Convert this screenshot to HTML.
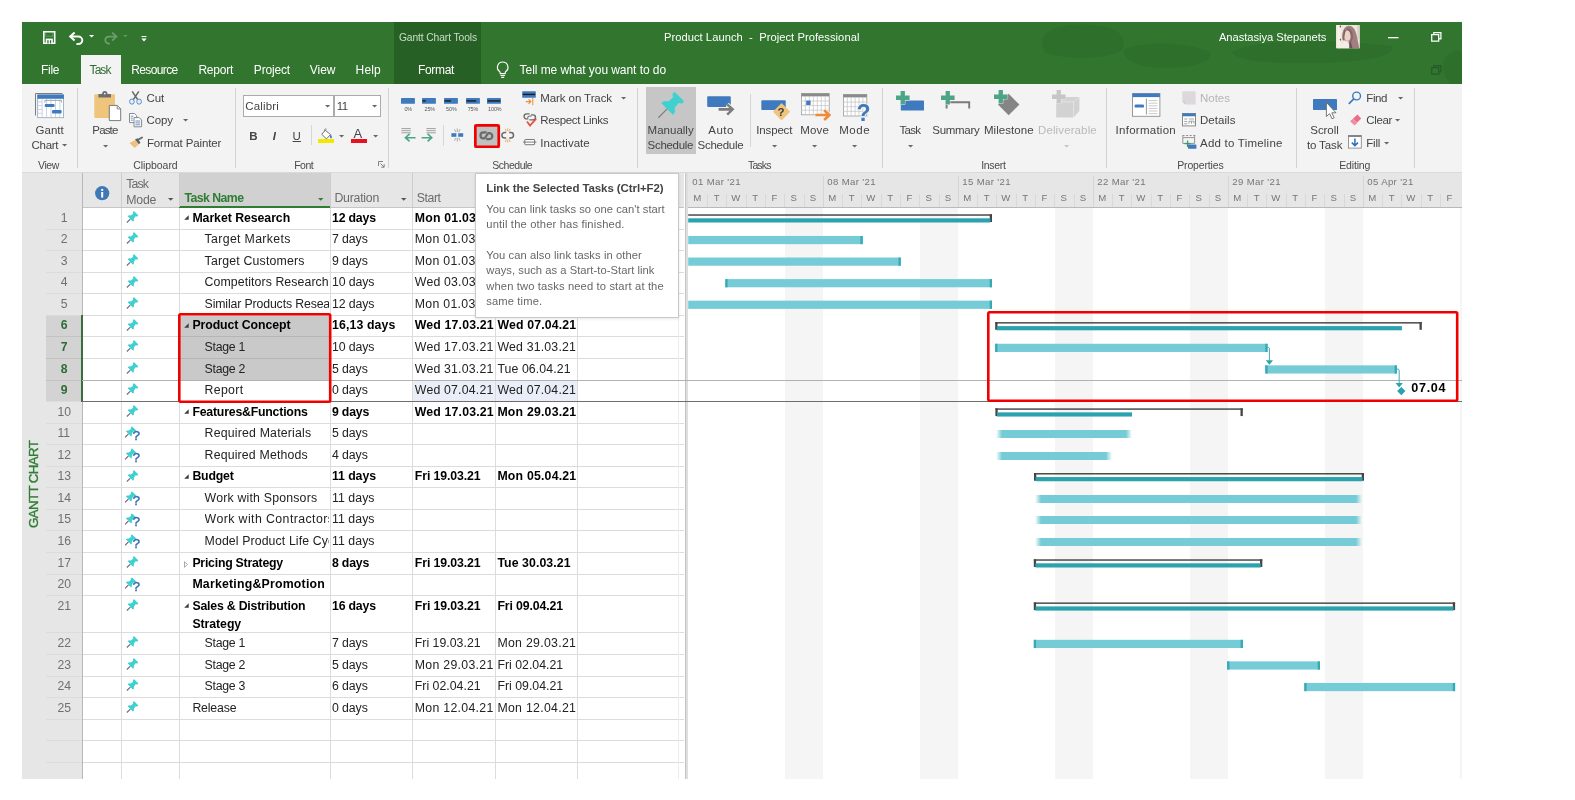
<!DOCTYPE html>
<html lang="en"><head><meta charset="utf-8"><title>Product Launch - Project Professional</title>
<style>
html,body{margin:0;padding:0;background:#fff}
body{width:1575px;height:800px;position:relative;overflow:hidden;font-family:"Liberation Sans",sans-serif}
#app{position:absolute;left:0;top:0;width:1575px;height:800px;overflow:hidden;will-change:transform}
.a{position:absolute}
.t{position:absolute;white-space:pre;line-height:1}
svg{overflow:visible}
</style></head>
<body>
<div id="app">
<div class="a" style="left:22.00px;top:22.00px;width:1440.00px;height:62.30px;background:#31752f;"></div>
<svg class="a" style="left:22px;top:22px;overflow:hidden" width="1440" height="62.3" viewBox="22 22 1440 62.3"><g fill="#2a672a" opacity="0.42"><path d="M1042 40C1046 26 1075 22 1100 26C1120 28 1128 40 1122 50C1110 60 1060 60 1044 52Z"/><path d="M1124 50C1140 40 1190 42 1210 52C1214 62 1190 69 1160 68C1138 67 1122 60 1124 50Z"/><path d="M1232 52C1250 40 1330 38 1392 46C1398 56 1360 64 1300 63C1260 63 1236 60 1232 52Z"/><path d="M1444 60C1450 50 1462 48 1470 52V84H1450C1444 76 1442 68 1444 60Z"/></g></svg>
<div class="a" style="left:394.00px;top:22.00px;width:87.20px;height:62.30px;background:#266024;"></div>
<div class="a" style="left:80.50px;top:55.00px;width:40.50px;height:30.00px;background:#f3f3f3;"></div>
<div class="a" style="left:22.00px;top:84.30px;width:1440.00px;height:87.60px;background:#f3f3f3;"></div>
<div class="a" style="left:22.00px;top:171.60px;width:1440.00px;height:1.00px;background:#dadada;"></div>
<div class="a" style="left:77.10px;top:88.30px;width:1.00px;height:80.00px;background:#d2d2d2;"></div>
<div class="a" style="left:234.90px;top:88.30px;width:1.00px;height:80.00px;background:#d2d2d2;"></div>
<div class="a" style="left:387.80px;top:88.30px;width:1.00px;height:80.00px;background:#d2d2d2;"></div>
<div class="a" style="left:636.80px;top:88.30px;width:1.00px;height:80.00px;background:#d2d2d2;"></div>
<div class="a" style="left:882.00px;top:88.30px;width:1.00px;height:80.00px;background:#d2d2d2;"></div>
<div class="a" style="left:1105.80px;top:88.30px;width:1.00px;height:80.00px;background:#d2d2d2;"></div>
<div class="a" style="left:1296.20px;top:88.30px;width:1.00px;height:80.00px;background:#d2d2d2;"></div>
<div class="a" style="left:1413.90px;top:88.30px;width:1.00px;height:80.00px;background:#d2d2d2;"></div>
<div class="a" style="left:311.20px;top:125.30px;width:1.00px;height:20.00px;background:#d6d6d6;"></div>
<div class="a" style="left:442.90px;top:125.30px;width:1.00px;height:20.50px;background:#d6d6d6;"></div>
<div class="a" style="left:750.20px;top:94.00px;width:1.00px;height:52.70px;background:#d6d6d6;"></div>
<svg class="a" style="left:61.70px;top:144.20px;" width="5.20" height="2.60" viewBox="0 0 5.2 2.6"><path d="M0 0H5.2L2.6 2.6Z" fill="#666"/></svg>
<svg class="a" style="left:102.70px;top:144.60px;" width="5.20" height="2.60" viewBox="0 0 5.2 2.6"><path d="M0 0H5.2L2.6 2.6Z" fill="#666"/></svg>
<svg class="a" style="left:182.70px;top:119.00px;" width="5.20" height="2.60" viewBox="0 0 5.2 2.6"><path d="M0 0H5.2L2.6 2.6Z" fill="#666"/></svg>
<div class="a" style="left:243.4px;top:94.5px;width:90.6px;height:22.2px;background:#fff;border:1px solid #ababab;box-sizing:border-box"></div>
<div class="a" style="left:334.2px;top:94.5px;width:46.8px;height:22.2px;background:#fff;border:1px solid #ababab;box-sizing:border-box"></div>
<svg class="a" style="left:324.70px;top:104.60px;" width="5.20" height="2.60" viewBox="0 0 5.2 2.6"><path d="M0 0H5.2L2.6 2.6Z" fill="#666"/></svg>
<svg class="a" style="left:371.70px;top:104.60px;" width="5.20" height="2.60" viewBox="0 0 5.2 2.6"><path d="M0 0H5.2L2.6 2.6Z" fill="#666"/></svg>
<svg class="a" style="left:339.40px;top:134.50px;" width="5.20" height="2.60" viewBox="0 0 5.2 2.6"><path d="M0 0H5.2L2.6 2.6Z" fill="#666"/></svg>
<svg class="a" style="left:372.70px;top:134.50px;" width="5.20" height="2.60" viewBox="0 0 5.2 2.6"><path d="M0 0H5.2L2.6 2.6Z" fill="#666"/></svg>
<div class="a" style="left:318.30px;top:139.30px;width:15.60px;height:3.70px;background:#f5e800;"></div>
<div class="a" style="left:351.00px;top:139.30px;width:15.80px;height:3.70px;background:#e81123;"></div>
<svg class="a" style="left:621.10px;top:96.70px;" width="5.20" height="2.60" viewBox="0 0 5.2 2.6"><path d="M0 0H5.2L2.6 2.6Z" fill="#666"/></svg>
<div class="a" style="left:646.00px;top:87.00px;width:49.70px;height:67.00px;background:#c6c6c6;"></div>
<svg class="a" style="left:771.80px;top:144.60px;" width="5.20" height="2.60" viewBox="0 0 5.2 2.6"><path d="M0 0H5.2L2.6 2.6Z" fill="#666"/></svg>
<svg class="a" style="left:812.10px;top:144.60px;" width="5.20" height="2.60" viewBox="0 0 5.2 2.6"><path d="M0 0H5.2L2.6 2.6Z" fill="#666"/></svg>
<svg class="a" style="left:852.40px;top:144.60px;" width="5.20" height="2.60" viewBox="0 0 5.2 2.6"><path d="M0 0H5.2L2.6 2.6Z" fill="#666"/></svg>
<svg class="a" style="left:908.10px;top:144.60px;" width="5.20" height="2.60" viewBox="0 0 5.2 2.6"><path d="M0 0H5.2L2.6 2.6Z" fill="#666"/></svg>
<svg class="a" style="left:1064.40px;top:144.60px;" width="5.20" height="2.60" viewBox="0 0 5.2 2.6"><path d="M0 0H5.2L2.6 2.6Z" fill="#c4c4c4"/></svg>
<svg class="a" style="left:1397.70px;top:96.70px;" width="5.20" height="2.60" viewBox="0 0 5.2 2.6"><path d="M0 0H5.2L2.6 2.6Z" fill="#666"/></svg>
<svg class="a" style="left:1395.40px;top:119.00px;" width="5.20" height="2.60" viewBox="0 0 5.2 2.6"><path d="M0 0H5.2L2.6 2.6Z" fill="#666"/></svg>
<svg class="a" style="left:1383.70px;top:141.50px;" width="5.20" height="2.60" viewBox="0 0 5.2 2.6"><path d="M0 0H5.2L2.6 2.6Z" fill="#666"/></svg>
<div class="a" style="left:22.00px;top:172.60px;width:24.20px;height:606.40px;background:#e6e6e6;"></div>
<div class="a" style="left:46.20px;top:172.60px;width:36.00px;height:606.40px;background:#e6e6e6;"></div>
<div class="a" style="left:82.20px;top:172.60px;width:602.30px;height:34.90px;background:#e6e6e6;"></div>
<div class="a" style="left:82.20px;top:207.50px;width:602.30px;height:571.50px;background:#fff;"></div>
<div class="a" style="left:179.30px;top:172.60px;width:151.00px;height:34.90px;background:#d1d1d1;"></div>
<div class="a" style="left:179.30px;top:205.90px;width:151.50px;height:1.80px;background:#2e7d32;"></div>
<div class="a" style="left:82.20px;top:206.90px;width:97.10px;height:1.00px;background:#c6c6c6;"></div>
<div class="a" style="left:330.30px;top:206.90px;width:354.20px;height:1.00px;background:#c6c6c6;"></div>
<div class="a" style="left:684.50px;top:172.60px;width:3.80px;height:606.40px;background:#dedede;"></div>
<div class="a" style="left:684.50px;top:172.60px;width:1.00px;height:606.40px;background:#c4c4c4;"></div>
<div class="a" style="left:688.20px;top:172.60px;width:773.80px;height:34.90px;background:#e6e6e6;"></div>
<div class="a" style="left:688.20px;top:207.50px;width:773.80px;height:571.50px;background:#fff;"></div>
<div class="a" style="left:784.73px;top:207.50px;width:38.57px;height:571.50px;background:#f5f5f5;"></div>
<div class="a" style="left:919.73px;top:207.50px;width:38.57px;height:571.50px;background:#f5f5f5;"></div>
<div class="a" style="left:1054.73px;top:207.50px;width:38.57px;height:571.50px;background:#f5f5f5;"></div>
<div class="a" style="left:1189.73px;top:207.50px;width:38.57px;height:571.50px;background:#f5f5f5;"></div>
<div class="a" style="left:1324.73px;top:207.50px;width:38.57px;height:571.50px;background:#f5f5f5;"></div>
<div class="a" style="left:1459.73px;top:207.50px;width:2.27px;height:571.50px;background:#f5f5f5;"></div>
<div class="a" style="left:688.20px;top:206.60px;width:773.80px;height:1.10px;background:#b9b9b9;"></div>
<div class="a" style="left:46.20px;top:315.31px;width:36.00px;height:86.25px;background:#d3d3d3;"></div>
<div class="a" style="left:179.30px;top:315.31px;width:151.00px;height:64.69px;background:#c9c9c9;"></div>
<div class="a" style="left:412.20px;top:380.00px;width:165.50px;height:21.56px;background:#e9eef8;"></div>
<div class="a" style="left:46.20px;top:228.56px;width:638.30px;height:1.00px;background:#dcdcdc;"></div>
<div class="a" style="left:46.20px;top:250.12px;width:638.30px;height:1.00px;background:#dcdcdc;"></div>
<div class="a" style="left:46.20px;top:271.69px;width:638.30px;height:1.00px;background:#dcdcdc;"></div>
<div class="a" style="left:46.20px;top:293.25px;width:638.30px;height:1.00px;background:#dcdcdc;"></div>
<div class="a" style="left:46.20px;top:314.81px;width:638.30px;height:1.00px;background:#dcdcdc;"></div>
<div class="a" style="left:46.20px;top:336.38px;width:638.30px;height:1.00px;background:#dcdcdc;"></div>
<div class="a" style="left:46.20px;top:357.94px;width:638.30px;height:1.00px;background:#dcdcdc;"></div>
<div class="a" style="left:46.20px;top:379.50px;width:638.30px;height:1.00px;background:#dcdcdc;"></div>
<div class="a" style="left:46.20px;top:401.06px;width:638.30px;height:1.00px;background:#dcdcdc;"></div>
<div class="a" style="left:46.20px;top:422.62px;width:638.30px;height:1.00px;background:#dcdcdc;"></div>
<div class="a" style="left:46.20px;top:444.19px;width:638.30px;height:1.00px;background:#dcdcdc;"></div>
<div class="a" style="left:46.20px;top:465.75px;width:638.30px;height:1.00px;background:#dcdcdc;"></div>
<div class="a" style="left:46.20px;top:487.31px;width:638.30px;height:1.00px;background:#dcdcdc;"></div>
<div class="a" style="left:46.20px;top:508.88px;width:638.30px;height:1.00px;background:#dcdcdc;"></div>
<div class="a" style="left:46.20px;top:530.44px;width:638.30px;height:1.00px;background:#dcdcdc;"></div>
<div class="a" style="left:46.20px;top:552.00px;width:638.30px;height:1.00px;background:#dcdcdc;"></div>
<div class="a" style="left:46.20px;top:573.56px;width:638.30px;height:1.00px;background:#dcdcdc;"></div>
<div class="a" style="left:46.20px;top:595.12px;width:638.30px;height:1.00px;background:#dcdcdc;"></div>
<div class="a" style="left:46.20px;top:632.42px;width:638.30px;height:1.00px;background:#dcdcdc;"></div>
<div class="a" style="left:46.20px;top:653.99px;width:638.30px;height:1.00px;background:#dcdcdc;"></div>
<div class="a" style="left:46.20px;top:675.55px;width:638.30px;height:1.00px;background:#dcdcdc;"></div>
<div class="a" style="left:46.20px;top:697.11px;width:638.30px;height:1.00px;background:#dcdcdc;"></div>
<div class="a" style="left:46.20px;top:718.67px;width:638.30px;height:1.00px;background:#dcdcdc;"></div>
<div class="a" style="left:46.20px;top:740.24px;width:638.30px;height:1.00px;background:#dcdcdc;"></div>
<div class="a" style="left:46.20px;top:761.80px;width:638.30px;height:1.00px;background:#dcdcdc;"></div>
<div class="a" style="left:179.30px;top:336.38px;width:151.00px;height:1.00px;background:#b5b5b5;"></div>
<div class="a" style="left:46.20px;top:336.38px;width:36.00px;height:1.00px;background:#c2c2c2;"></div>
<div class="a" style="left:179.30px;top:357.94px;width:151.00px;height:1.00px;background:#b5b5b5;"></div>
<div class="a" style="left:46.20px;top:357.94px;width:36.00px;height:1.00px;background:#c2c2c2;"></div>
<div class="a" style="left:179.30px;top:379.50px;width:151.00px;height:1.00px;background:#b5b5b5;"></div>
<div class="a" style="left:46.20px;top:379.50px;width:36.00px;height:1.00px;background:#c2c2c2;"></div>
<div class="a" style="left:121.10px;top:207.50px;width:1.00px;height:571.50px;background:#dcdcdc;"></div>
<div class="a" style="left:121.10px;top:172.60px;width:1.00px;height:34.90px;background:#cdcdcd;"></div>
<div class="a" style="left:178.80px;top:207.50px;width:1.00px;height:571.50px;background:#dcdcdc;"></div>
<div class="a" style="left:178.80px;top:172.60px;width:1.00px;height:34.90px;background:#cdcdcd;"></div>
<div class="a" style="left:329.80px;top:207.50px;width:1.00px;height:571.50px;background:#dcdcdc;"></div>
<div class="a" style="left:329.80px;top:172.60px;width:1.00px;height:34.90px;background:#cdcdcd;"></div>
<div class="a" style="left:411.70px;top:207.50px;width:1.00px;height:571.50px;background:#dcdcdc;"></div>
<div class="a" style="left:411.70px;top:172.60px;width:1.00px;height:34.90px;background:#cdcdcd;"></div>
<div class="a" style="left:495.20px;top:207.50px;width:1.00px;height:571.50px;background:#dcdcdc;"></div>
<div class="a" style="left:495.20px;top:172.60px;width:1.00px;height:34.90px;background:#cdcdcd;"></div>
<div class="a" style="left:577.20px;top:207.50px;width:1.00px;height:571.50px;background:#dcdcdc;"></div>
<div class="a" style="left:577.20px;top:172.60px;width:1.00px;height:34.90px;background:#cdcdcd;"></div>
<div class="a" style="left:678.20px;top:207.50px;width:1.00px;height:571.50px;background:#ececec;"></div>
<div class="a" style="left:81.60px;top:172.60px;width:1.20px;height:606.40px;background:#b7b7b7;"></div>
<div class="a" style="left:81.00px;top:315.31px;width:2.00px;height:86.25px;background:#3a6f3d;"></div>
<div class="a" style="left:82.20px;top:380.40px;width:1379.80px;height:1.00px;background:#b2b2b2;"></div>
<div class="a" style="left:82.20px;top:401.06px;width:1379.80px;height:1.00px;background:#6e6e6e;"></div>
<svg class="a" style="left:168.27px;top:198.03px;" width="5.46" height="2.73" viewBox="0 0 5.460000000000001 2.7300000000000004"><path d="M0 0H5.460000000000001L2.7300000000000004 2.7300000000000004Z" fill="#555"/></svg>
<svg class="a" style="left:318.47px;top:198.03px;" width="5.46" height="2.73" viewBox="0 0 5.460000000000001 2.7300000000000004"><path d="M0 0H5.460000000000001L2.7300000000000004 2.7300000000000004Z" fill="#2e7d32"/></svg>
<svg class="a" style="left:401.07px;top:198.03px;" width="5.46" height="2.73" viewBox="0 0 5.460000000000001 2.7300000000000004"><path d="M0 0H5.460000000000001L2.7300000000000004 2.7300000000000004Z" fill="#555"/></svg>
<svg class="a" style="left:183.70px;top:214.90px;" width="5.00" height="5.00" viewBox="0 0 5 5"><path d="M4.7 0.2V4.7H0.2Z" fill="#3c3c3c"/></svg>
<svg class="a" style="left:183.70px;top:322.71px;" width="5.00" height="5.00" viewBox="0 0 5 5"><path d="M4.7 0.2V4.7H0.2Z" fill="#3c3c3c"/></svg>
<svg class="a" style="left:183.70px;top:408.96px;" width="5.00" height="5.00" viewBox="0 0 5 5"><path d="M4.7 0.2V4.7H0.2Z" fill="#3c3c3c"/></svg>
<svg class="a" style="left:183.70px;top:473.65px;" width="5.00" height="5.00" viewBox="0 0 5 5"><path d="M4.7 0.2V4.7H0.2Z" fill="#3c3c3c"/></svg>
<svg class="a" style="left:184.20px;top:560.50px;" width="4.00" height="7.00" viewBox="0 0 4 7"><path d="M0.5 0.7L3.5 3.5L0.5 6.3Z" fill="#fff" stroke="#888" stroke-width="0.7"/></svg>
<svg class="a" style="left:183.70px;top:603.02px;" width="5.00" height="5.00" viewBox="0 0 5 5"><path d="M4.7 0.2V4.7H0.2Z" fill="#3c3c3c"/></svg>
<div class="a" style="left:707.09px;top:194.00px;width:1.00px;height:12.80px;background:#d8d8d8;"></div>
<div class="a" style="left:726.37px;top:194.00px;width:1.00px;height:12.80px;background:#d8d8d8;"></div>
<div class="a" style="left:745.66px;top:194.00px;width:1.00px;height:12.80px;background:#d8d8d8;"></div>
<div class="a" style="left:764.94px;top:194.00px;width:1.00px;height:12.80px;background:#d8d8d8;"></div>
<div class="a" style="left:784.23px;top:194.00px;width:1.00px;height:12.80px;background:#d8d8d8;"></div>
<div class="a" style="left:803.51px;top:194.00px;width:1.00px;height:12.80px;background:#d8d8d8;"></div>
<div class="a" style="left:822.80px;top:176.00px;width:1.00px;height:31.00px;background:#d6d6d6;"></div>
<div class="a" style="left:842.09px;top:194.00px;width:1.00px;height:12.80px;background:#d8d8d8;"></div>
<div class="a" style="left:861.37px;top:194.00px;width:1.00px;height:12.80px;background:#d8d8d8;"></div>
<div class="a" style="left:880.66px;top:194.00px;width:1.00px;height:12.80px;background:#d8d8d8;"></div>
<div class="a" style="left:899.94px;top:194.00px;width:1.00px;height:12.80px;background:#d8d8d8;"></div>
<div class="a" style="left:919.23px;top:194.00px;width:1.00px;height:12.80px;background:#d8d8d8;"></div>
<div class="a" style="left:938.51px;top:194.00px;width:1.00px;height:12.80px;background:#d8d8d8;"></div>
<div class="a" style="left:957.80px;top:176.00px;width:1.00px;height:31.00px;background:#d6d6d6;"></div>
<div class="a" style="left:977.09px;top:194.00px;width:1.00px;height:12.80px;background:#d8d8d8;"></div>
<div class="a" style="left:996.37px;top:194.00px;width:1.00px;height:12.80px;background:#d8d8d8;"></div>
<div class="a" style="left:1015.66px;top:194.00px;width:1.00px;height:12.80px;background:#d8d8d8;"></div>
<div class="a" style="left:1034.94px;top:194.00px;width:1.00px;height:12.80px;background:#d8d8d8;"></div>
<div class="a" style="left:1054.23px;top:194.00px;width:1.00px;height:12.80px;background:#d8d8d8;"></div>
<div class="a" style="left:1073.51px;top:194.00px;width:1.00px;height:12.80px;background:#d8d8d8;"></div>
<div class="a" style="left:1092.80px;top:176.00px;width:1.00px;height:31.00px;background:#d6d6d6;"></div>
<div class="a" style="left:1112.09px;top:194.00px;width:1.00px;height:12.80px;background:#d8d8d8;"></div>
<div class="a" style="left:1131.37px;top:194.00px;width:1.00px;height:12.80px;background:#d8d8d8;"></div>
<div class="a" style="left:1150.66px;top:194.00px;width:1.00px;height:12.80px;background:#d8d8d8;"></div>
<div class="a" style="left:1169.94px;top:194.00px;width:1.00px;height:12.80px;background:#d8d8d8;"></div>
<div class="a" style="left:1189.23px;top:194.00px;width:1.00px;height:12.80px;background:#d8d8d8;"></div>
<div class="a" style="left:1208.51px;top:194.00px;width:1.00px;height:12.80px;background:#d8d8d8;"></div>
<div class="a" style="left:1227.80px;top:176.00px;width:1.00px;height:31.00px;background:#d6d6d6;"></div>
<div class="a" style="left:1247.09px;top:194.00px;width:1.00px;height:12.80px;background:#d8d8d8;"></div>
<div class="a" style="left:1266.37px;top:194.00px;width:1.00px;height:12.80px;background:#d8d8d8;"></div>
<div class="a" style="left:1285.66px;top:194.00px;width:1.00px;height:12.80px;background:#d8d8d8;"></div>
<div class="a" style="left:1304.94px;top:194.00px;width:1.00px;height:12.80px;background:#d8d8d8;"></div>
<div class="a" style="left:1324.23px;top:194.00px;width:1.00px;height:12.80px;background:#d8d8d8;"></div>
<div class="a" style="left:1343.51px;top:194.00px;width:1.00px;height:12.80px;background:#d8d8d8;"></div>
<div class="a" style="left:1362.80px;top:176.00px;width:1.00px;height:31.00px;background:#d6d6d6;"></div>
<div class="a" style="left:1382.09px;top:194.00px;width:1.00px;height:12.80px;background:#d8d8d8;"></div>
<div class="a" style="left:1401.37px;top:194.00px;width:1.00px;height:12.80px;background:#d8d8d8;"></div>
<div class="a" style="left:1420.66px;top:194.00px;width:1.00px;height:12.80px;background:#d8d8d8;"></div>
<div class="a" style="left:1439.94px;top:194.00px;width:1.00px;height:12.80px;background:#d8d8d8;"></div>
<div class="a" style="left:996.30px;top:430.12px;width:135.40px;height:8.00px;background:linear-gradient(90deg,rgba(118,204,214,0) 0,#76ccd6 6px,#76ccd6 calc(100% - 6px),rgba(118,204,214,0) 100%);"></div>
<div class="a" style="left:996.30px;top:451.69px;width:115.40px;height:8.00px;background:linear-gradient(90deg,rgba(118,204,214,0) 0,#76ccd6 6px,#76ccd6 calc(100% - 6px),rgba(118,204,214,0) 100%);"></div>
<div class="a" style="left:1035.00px;top:494.81px;width:326.80px;height:8.00px;background:linear-gradient(90deg,rgba(118,204,214,0) 0,#76ccd6 6px,#76ccd6 calc(100% - 6px),rgba(118,204,214,0) 100%);"></div>
<div class="a" style="left:1035.00px;top:516.38px;width:326.80px;height:8.00px;background:linear-gradient(90deg,rgba(118,204,214,0) 0,#76ccd6 6px,#76ccd6 calc(100% - 6px),rgba(118,204,214,0) 100%);"></div>
<div class="a" style="left:1035.00px;top:537.94px;width:326.80px;height:8.00px;background:linear-gradient(90deg,rgba(118,204,214,0) 0,#76ccd6 6px,#76ccd6 calc(100% - 6px),rgba(118,204,214,0) 100%);"></div>
<svg class="a" style="left:0;top:0" width="1575" height="800" viewBox="0 0 1575 800"><rect x="688.20" y="214.30" width="303.80" height="1.45" fill="#454545"/><rect x="989.70" y="214.30" width="2.30" height="7.70" fill="#454545"/><rect x="688.20" y="218.30" width="302.20" height="4.20" fill="#2ba2ad"/><rect x="688.20" y="235.96" width="174.50" height="8.20" fill="#76ccd6"/><rect x="860.40" y="235.96" width="2.30" height="8.20" fill="#35a9b4"/><rect x="688.20" y="257.52" width="212.60" height="8.20" fill="#76ccd6"/><rect x="898.50" y="257.52" width="2.30" height="8.20" fill="#35a9b4"/><rect x="725.30" y="279.09" width="266.70" height="8.20" fill="#76ccd6"/><rect x="725.30" y="279.09" width="2.30" height="8.20" fill="#35a9b4"/><rect x="989.70" y="279.09" width="2.30" height="8.20" fill="#35a9b4"/><rect x="688.20" y="300.65" width="303.80" height="8.20" fill="#76ccd6"/><rect x="989.70" y="300.65" width="2.30" height="8.20" fill="#35a9b4"/><rect x="995.20" y="322.11" width="426.60" height="1.45" fill="#454545"/><rect x="995.20" y="322.11" width="2.30" height="7.70" fill="#454545"/><rect x="1419.50" y="322.11" width="2.30" height="7.70" fill="#454545"/><rect x="996.80" y="326.11" width="405.10" height="4.20" fill="#2ba2ad"/><rect x="995.20" y="343.77" width="272.40" height="8.20" fill="#76ccd6"/><rect x="995.20" y="343.77" width="2.30" height="8.20" fill="#35a9b4"/><rect x="1265.30" y="343.77" width="2.30" height="8.20" fill="#35a9b4"/><rect x="1265.30" y="365.34" width="131.60" height="8.20" fill="#76ccd6"/><rect x="1265.30" y="365.34" width="2.30" height="8.20" fill="#35a9b4"/><rect x="1394.60" y="365.34" width="2.30" height="8.20" fill="#35a9b4"/><rect x="995.40" y="408.36" width="247.40" height="1.45" fill="#454545"/><rect x="995.40" y="408.36" width="2.30" height="7.70" fill="#454545"/><rect x="1240.50" y="408.36" width="2.30" height="7.70" fill="#454545"/><rect x="997.00" y="412.36" width="135.00" height="4.20" fill="#2ba2ad"/><rect x="1034.00" y="473.05" width="330.00" height="1.45" fill="#454545"/><rect x="1034.00" y="473.05" width="2.30" height="7.70" fill="#454545"/><rect x="1361.70" y="473.05" width="2.30" height="7.70" fill="#454545"/><rect x="1035.60" y="477.05" width="326.80" height="4.20" fill="#2ba2ad"/><rect x="1033.80" y="559.30" width="228.50" height="1.45" fill="#454545"/><rect x="1033.80" y="559.30" width="2.30" height="7.70" fill="#454545"/><rect x="1260.00" y="559.30" width="2.30" height="7.70" fill="#454545"/><rect x="1035.40" y="563.30" width="225.30" height="4.20" fill="#2ba2ad"/><rect x="1033.80" y="602.42" width="421.30" height="1.45" fill="#454545"/><rect x="1033.80" y="602.42" width="2.30" height="7.70" fill="#454545"/><rect x="1452.80" y="602.42" width="2.30" height="7.70" fill="#454545"/><rect x="1035.40" y="606.42" width="418.10" height="4.20" fill="#2ba2ad"/><rect x="1033.80" y="639.82" width="209.10" height="8.20" fill="#76ccd6"/><rect x="1033.80" y="639.82" width="2.30" height="8.20" fill="#35a9b4"/><rect x="1240.60" y="639.82" width="2.30" height="8.20" fill="#35a9b4"/><rect x="1227.10" y="661.39" width="92.90" height="8.20" fill="#76ccd6"/><rect x="1227.10" y="661.39" width="2.30" height="8.20" fill="#35a9b4"/><rect x="1317.70" y="661.39" width="2.30" height="8.20" fill="#35a9b4"/><rect x="1304.30" y="682.95" width="150.80" height="8.20" fill="#76ccd6"/><rect x="1304.30" y="682.95" width="2.30" height="8.20" fill="#35a9b4"/><rect x="1452.80" y="682.95" width="2.30" height="8.20" fill="#35a9b4"/></svg>
<svg class="a" style="left:1260px;top:340px" width="160" height="60" viewBox="1260 340 160 60"><path d="M1267.6 347.4H1268.6L1269.4 348.4V360.6" fill="none" stroke="#2ba2ad" stroke-width="0.9"/><path d="M1265.8 360.2H1273L1269.4 364.7Z" fill="#2ba2ad"/><path d="M1396.9 369H1398.2L1399.2 370.2V383.4" fill="none" stroke="#2ba2ad" stroke-width="0.9"/><path d="M1395.6 383H1402.8L1399.2 387.4Z" fill="#2ba2ad"/><path d="M1401.3 386.9L1405.5 391.1L1401.3 395.3L1397.1 391.1Z" fill="#2ba2ad"/></svg>
<div class="a" style="left:474.00px;top:124.30px;width:25.50px;height:23.60px;background:#c0c0c0;"></div>
<svg class="a" style="left:473.70px;top:124.00px;" width="26.10" height="24.10" viewBox="0 0 26.10 24.10"><rect x="1.35" y="1.35" width="23.40" height="21.40" rx="1.5" fill="none" stroke="#f20000" stroke-width="2.7"/></svg>
<svg class="a" style="left:43.00px;top:31.00px;" width="12.50" height="13.00" viewBox="0 0 12.5 13"><path d="M0.8 0.8H11.7V12.2H0.8Z" fill="none" stroke="#fff" stroke-width="1.6"/><rect x="2.7" y="7.6" width="7.1" height="4.8" fill="#fff"/><rect x="4.3" y="9.2" width="1.3" height="3.2" fill="#31752f"/><rect x="6.9" y="9.2" width="1.3" height="3.2" fill="#31752f"/><path d="M2.7 0.8V5.2H9.8V0.8" fill="none" stroke="#fff" stroke-width="0.5" opacity="0.5"/></svg>
<svg class="a" style="left:69.00px;top:31.50px;" width="14.50" height="12.50" viewBox="0 0 14.5 12.5"><path d="M5.6 0.6L1.2 4.6L5.6 8.6" fill="none" stroke="#fff" stroke-width="2"/><path d="M1.6 4.6H9.2A4.1 3.7 0 0 1 9.2 12H7.4" fill="none" stroke="#fff" stroke-width="2"/></svg>
<svg class="a" style="left:88.90px;top:35.30px;" width="5.20" height="2.60" viewBox="0 0 5.2 2.6"><path d="M0 0H5.2L2.6 2.6Z" fill="#fff"/></svg>
<svg class="a" style="left:103.00px;top:31.50px;" width="14.50" height="12.50" viewBox="0 0 14.5 12.5"><g opacity="0.38"><path d="M9.1 0.6L13.5 4.6L9.1 8.6" fill="none" stroke="#cfe3cf" stroke-width="1.7"/><path d="M13.1 4.6H5.3A4 3.6 0 0 0 5.3 11.6H6.9" fill="none" stroke="#cfe3cf" stroke-width="1.7"/></g></svg>
<svg class="a" style="left:122.66px;top:35.43px;" width="4.68" height="2.34" viewBox="0 0 4.680000000000001 2.3400000000000003"><path d="M0 0H4.680000000000001L2.3400000000000003 2.3400000000000003Z" fill="#5f9a5e"/></svg>
<svg class="a" style="left:141.00px;top:36.00px;" width="6.00" height="6.50" viewBox="0 0 6 6.5"><rect x="0.6" y="0" width="4.8" height="1.1" fill="#fff"/><path d="M0.3 2.6H5.7L3 5.6Z" fill="#fff"/></svg>
<svg class="a" style="left:495.50px;top:61.00px;" width="13.50" height="18.00" viewBox="0 0 13.5 18"><path d="M6.7 1A5.2 5.2 0 0 0 3.6 10.4Q4.3 11.2 4.3 12.6H9.1Q9.1 11.2 9.8 10.4A5.2 5.2 0 0 0 6.7 1Z" fill="none" stroke="#fff" stroke-width="1.2"/><path d="M4.5 14.5H8.9M5.2 16.4H8.2" stroke="#fff" stroke-width="1.1"/></svg>
<svg class="a" style="left:1336.00px;top:24.90px;" width="23.80" height="23.30" viewBox="0 0 23.8 23.3"><rect width="23.8" height="23.3" fill="#efe7dc"/><path d="M1.5 0H4.5V23.3H1.5Z" fill="#f8f3ea"/><path d="M21.4 0H23V14H21.4Z" fill="#d8d0c4"/><path d="M6.4 15.2C5.4 8 7.6 1.4 12.6 0.7C17 0.5 19.6 5 20.6 10C21.6 15 22.6 19 23.2 23.3H13.2C13 20 12 17 9.6 15.6Z" fill="#a07f80"/><path d="M4.6 23.3C5.6 18.6 8 16.6 10.6 16.3C12.6 16.6 13.3 19 13.3 23.3Z" fill="#f3efe7"/><ellipse cx="11.5" cy="10.6" rx="3.5" ry="5.3" fill="#ecd3c5"/><path d="M10.6 16.2C11.6 16.6 12.4 16.2 12.8 15.4L13.2 18.6C12.2 18 11.2 17.2 10.6 16.2Z" fill="#e4c6b8"/><path d="M10.8 3.4C14 3 16.6 6 16.9 10C17.1 14 15.6 17.4 13.6 20C14.9 16 15.2 11.4 14 8C13.2 6 12 5 10.4 5.3Z" fill="#87676e"/><path d="M8.6 4.8C7 8 7 12 7.7 15.8C8.5 13 8.4 9 9.8 5.4Z" fill="#7c5e68"/><path d="M13.4 17C13.6 19.4 13.6 21.4 13.4 23.3H16.4C16 21 15.4 18.6 14.6 16.4Z" fill="#6d5160"/><ellipse cx="4.3" cy="1.6" rx="0.6" ry="1" fill="#3a3030"/><ellipse cx="4.4" cy="14.6" rx="0.5" ry="1.2" fill="#5a4a44"/></svg>
<svg class="a" style="left:1387.50px;top:36.80px;" width="10.50" height="1.50" viewBox="0 0 10.5 1.5"><rect width="10.5" height="1.3" fill="#fff"/></svg>
<svg class="a" style="left:1430.80px;top:31.80px;" width="10.60" height="9.80" viewBox="0 0 10.6 9.8"><path d="M0.7 2.7H7.7V9.1H0.7Z" fill="none" stroke="#fff" stroke-width="1.25"/><path d="M2.8 2.6V0.7H9.9V7H7.9" fill="none" stroke="#fff" stroke-width="1.25"/></svg>
<svg class="a" style="left:1430.80px;top:65.20px;" width="10.60" height="9.80" viewBox="0 0 10.6 9.8"><g opacity="0.85"><path d="M0.7 2.7H7.7V9.1H0.7Z" fill="none" stroke="#24552a" stroke-width="1.25"/><path d="M2.8 2.6V0.7H9.9V7H7.9" fill="none" stroke="#24552a" stroke-width="1.25"/></g></svg>
<svg class="a" style="left:34.50px;top:93.00px;" width="30.00" height="25.00" viewBox="0 0 30 25"><path d="M0.5 22.5V0.5H27.5" fill="none" stroke="#7d7d7d" stroke-width="1"/><rect x="2.7" y="1.9" width="25.9" height="22.8" fill="#fff" stroke="#8fa3bf" stroke-width="0.8"/><rect x="2.4" y="1.6" width="26.5" height="4.2" fill="#3f7abf"/><path d="M7.15 5.8V24.5M11.6 5.8V24.5M16 5.8V24.5M20.5 5.8V24.5M24.9 5.8V24.5M2.9 8.9H7.1M2.9 12.7H7.1M2.9 16.5H7.1M2.9 20.3H7.1" stroke="#b8c6dc" stroke-width="0.75" fill="none"/><path d="M9.9 9.6V7.4H26.4V9.6" fill="none" stroke="#9d9d9d" stroke-width="0.9"/><rect x="9.7" y="11.0" width="9.9" height="3.1" rx="1.1" fill="#3f7abf"/><rect x="17" y="17.1" width="9.6" height="3.5" rx="1.1" fill="#3f7abf"/></svg>
<svg class="a" style="left:94.00px;top:91.00px;" width="27.50" height="30.00" viewBox="0 0 27.5 30"><rect x="0.3" y="3.3" width="20.7" height="23.7" rx="0.9" fill="#efc57b"/><path d="M4.4 6.6V3.1H8.0Q8.2 0.1 10.8 0.1Q13.4 0.1 13.6 3.1H17V6.6Z" fill="#6e6e6e"/><circle cx="10.8" cy="2.6" r="0.9" fill="#f3f3f3"/><path d="M15.3 14.4H23.2L26.7 17.9V29.6H15.3Z" fill="#fff" stroke="#7b7b7b" stroke-width="1"/><path d="M23.2 14.4V17.9H26.7" fill="none" stroke="#7b7b7b" stroke-width="0.9"/></svg>
<svg class="a" style="left:129.00px;top:91.00px;" width="13.00" height="13.50" viewBox="0 0 13 13.5"><path d="M3.2 0.4L9.0 9.2M9.8 0.4L4.0 9.2" stroke="#666" stroke-width="1.5" fill="none"/><ellipse cx="2.9" cy="10.6" rx="2.3" ry="2.6" fill="#e6f0fa" stroke="#5a8bc9" stroke-width="1"/><ellipse cx="10.1" cy="10.6" rx="2.3" ry="2.6" fill="#e6f0fa" stroke="#5a8bc9" stroke-width="1"/></svg>
<svg class="a" style="left:129.00px;top:113.00px;" width="13.50" height="14.50" viewBox="0 0 13.5 14.5"><path d="M0.5 0.5H5.4L7.6 2.7V9.6H0.5Z" fill="#fff" stroke="#7d7d7d" stroke-width="0.9"/><path d="M5 4.6H10.2L12.6 7V13.8H5Z" fill="#fff" stroke="#7d7d7d" stroke-width="0.9"/><path d="M1.8 3.2H4.4M1.8 5.2H3.8M1.8 7.2H3.8" stroke="#3f7abf" stroke-width="0.8"/><path d="M6.4 8H11.2M6.4 9.9H11.2M6.4 11.8H11.2" stroke="#3f7abf" stroke-width="0.8"/></svg>
<svg class="a" style="left:129.00px;top:135.50px;" width="13.50" height="13.00" viewBox="0 0 13.5 13"><path d="M0.5 6.9L6.2 3.9L9.6 8.4L5.6 11.9Z" fill="#efc079"/><path d="M6.0 3.6L8.5 2.2L11.5 6.8L9.8 8.3Z" fill="#5f5f5f"/><path d="M9.8 3.4L13 1.5" stroke="#6a6a78" stroke-width="1.9" stroke-linecap="round"/></svg>
<svg class="a" style="left:320.50px;top:127.50px;" width="12.00" height="12.00" viewBox="0 0 12 12"><path d="M4.2 2.2L9.6 6.6L5.4 10.8L0.8 6.4Z" fill="#fff" stroke="#6d6d6d" stroke-width="0.95"/><path d="M3.6 3.4C3 1.4 4.4 0.3 5.6 1.2" fill="none" stroke="#6d6d6d" stroke-width="0.8"/><path d="M9.4 6.3C10.6 7.6 11.4 9 10.6 10C9.8 10.8 8.8 10 9 8.8Z" fill="#3f7abf"/></svg>
<svg class="a" style="left:377.50px;top:161.20px;" width="7.00" height="7.00" viewBox="0 0 7 7"><path d="M0.5 5V0.5H5" fill="none" stroke="#777" stroke-width="0.9"/><path d="M2.4 2.4L6 6M6.2 3.2V6.2H3.2" fill="none" stroke="#777" stroke-width="0.9"/></svg>
<svg class="a" style="left:400.70px;top:98.30px;" width="14.00" height="6.00" viewBox="0 0 14 6"><rect x="0" y="0" width="13.9" height="5.8" rx="0.6" fill="#3f7abf"/></svg>
<svg class="a" style="left:422.30px;top:98.30px;" width="14.00" height="6.00" viewBox="0 0 14 6"><rect x="0" y="0" width="13.9" height="5.8" rx="0.6" fill="#3f7abf"/><rect x="0.6" y="2.2" width="3.17" height="1.4" fill="#1c1c1c"/></svg>
<svg class="a" style="left:443.90px;top:98.30px;" width="14.00" height="6.00" viewBox="0 0 14 6"><rect x="0" y="0" width="13.9" height="5.8" rx="0.6" fill="#3f7abf"/><rect x="0.6" y="2.2" width="6.35" height="1.4" fill="#1c1c1c"/></svg>
<svg class="a" style="left:465.50px;top:98.30px;" width="14.00" height="6.00" viewBox="0 0 14 6"><rect x="0" y="0" width="13.9" height="5.8" rx="0.6" fill="#3f7abf"/><rect x="0.6" y="2.2" width="9.52" height="1.4" fill="#1c1c1c"/></svg>
<svg class="a" style="left:487.10px;top:98.30px;" width="14.00" height="6.00" viewBox="0 0 14 6"><rect x="0" y="0" width="13.9" height="5.8" rx="0.6" fill="#3f7abf"/><rect x="0.6" y="2.2" width="12.70" height="1.4" fill="#1c1c1c"/></svg>
<svg class="a" style="left:400.50px;top:128.00px;" width="15.20" height="13.60" viewBox="0 0 15.2 13.6"><path d="M0.4 0.6H9.8M0.4 2.7H9.8M0.4 4.8H9.8" stroke="#8a8a8a" stroke-width="0.8"/><path d="M14.6 9.7H4.6M8.6 5.9L4.4 9.7L8.6 13.4" fill="none" stroke="#4ea585" stroke-width="1.6"/></svg>
<svg class="a" style="left:421.20px;top:128.00px;" width="15.20" height="13.60" viewBox="0 0 15.2 13.6"><path d="M5.4 0.6H14.8M5.4 2.7H14.8M5.4 4.8H14.8" stroke="#8a8a8a" stroke-width="0.8"/><path d="M0.6 9.7H10.6M6.6 5.9L10.8 9.7L6.6 13.4" fill="none" stroke="#4ea585" stroke-width="1.6"/></svg>
<svg class="a" style="left:451.00px;top:128.30px;" width="13.00" height="14.00" viewBox="0 0 13 14"><rect x="0.4" y="5.2" width="5" height="3.6" fill="#3f7abf"/><rect x="7.2" y="5.2" width="5" height="3.6" fill="#3f7abf"/><path d="M6.3 0.4V4M6.3 10V13.6M3.4 1.2L5 4.2M9.2 1.2L7.6 4.2M3.4 12.8L5 9.8M9.2 12.8L7.6 9.8" stroke="#8d8d8d" stroke-width="0.7"/></svg>
<svg class="a" style="left:479.30px;top:130.60px;" width="15.00" height="9.50" viewBox="0 0 15 9.5"><path d="M7.6 1.4H4.5A3 3 0 0 0 4.5 7.4H5.6L9.2 2.2H10.3A3 3 0 0 1 10.3 8.2H7.2" fill="none" stroke="#6b6b6b" stroke-width="2.2" stroke-linejoin="round"/></svg>
<svg class="a" style="left:501.00px;top:128.00px;" width="13.50" height="15.00" viewBox="0 0 13.5 15"><path d="M5.2 4.6H3.6A2.7 2.7 0 0 0 3.6 10H5.2" fill="none" stroke="#6a6a6a" stroke-width="1.5"/><path d="M8.2 4.6H9.8A2.7 2.7 0 0 1 9.8 10H8.2" fill="none" stroke="#6a6a6a" stroke-width="1.5"/><path d="M6.7 0.2V3.2M4.2 0.8L5.4 3.4M9.2 0.8L8 3.4M6.7 14.6V11.6M4.2 14L5.4 11.4M9.2 14L8 11.4" stroke="#ee9a4d" stroke-width="0.8"/></svg>
<svg class="a" style="left:522.40px;top:90.60px;" width="14.20" height="14.40" viewBox="0 0 14.2 14.4"><rect x="0.2" y="0.2" width="13.6" height="6.6" rx="0.6" fill="#3f7abf"/><rect x="0.8" y="2.7" width="12.4" height="1.4" fill="#1c1c1c"/><path d="M10.8 6.8V14.2" stroke="#ee8a3a" stroke-width="1"/><path d="M3.8 10.6H8.8M6.6 8.4L8.9 10.6L6.6 12.8" fill="none" stroke="#ee8a3a" stroke-width="1.1"/></svg>
<svg class="a" style="left:522.60px;top:112.80px;" width="14.00" height="14.40" viewBox="0 0 14 14.4"><path d="M6.6 0.9H3.6A2.5 2.5 0 0 0 3.6 5.9H5.4" fill="none" stroke="#6a6a6a" stroke-width="1.4"/><path d="M6.4 6.9H10A2.5 2.5 0 0 0 10 1.9H8" fill="none" stroke="#6a6a6a" stroke-width="1.4"/><path d="M4.4 4.6C5.4 3 7 2.8 8.4 3.2" fill="none" stroke="#6a6a6a" stroke-width="1.2"/><path d="M4 8.6L7 12.6L13.2 5.6" fill="none" stroke="#e0533a" stroke-width="1.7"/></svg>
<svg class="a" style="left:522.80px;top:138.80px;" width="13.40" height="6.40" viewBox="0 0 13.4 6.4"><rect x="1.8" y="0.5" width="9.8" height="5.2" rx="0.5" fill="#fff" stroke="#6d6d6d" stroke-width="0.9"/><path d="M0 3.1H13.4" stroke="#6d6d6d" stroke-width="0.9"/></svg>
<svg class="a" style="left:658px;top:92px" width="27" height="26" viewBox="-13.5 -11 11.5 11"><g transform="translate(-7.45,-6.0) scale(1.02)"><g transform="rotate(45)"><path d="M0 3V8.2" stroke="#7d7d7d" stroke-width="0.5"/><path d="M-2.6 -4.3H2.6Q3.3 -3.4 2.5 -2.7L1.6 -2.1L1.9 0.5Q3.6 1.4 3.4 3H-3.4Q-3.6 1.4 -1.9 0.5L-1.6 -2.1L-2.5 -2.7Q-3.3 -3.4 -2.6 -4.3Z" fill="#3fd0d0"/></g></g></svg>
<svg class="a" style="left:706.80px;top:95.80px;" width="27.20" height="19.20" viewBox="0 0 27.2 19.2"><rect x="0.2" y="0.2" width="23.6" height="10.7" rx="0.8" fill="#3f7abf"/><path d="M11.6 13.4H24.6M20.2 8.4L25.6 13.4L20.2 18.6" fill="none" stroke="#f3f3f3" stroke-width="4.4"/><path d="M11.6 13.4H24.6M20.2 8.4L25.6 13.4L20.2 18.6" fill="none" stroke="#7d7d7d" stroke-width="2.6"/></svg>
<svg class="a" style="left:761.00px;top:99.80px;" width="29.50" height="20.60" viewBox="0 0 29.5 20.6"><rect x="0.3" y="0.3" width="24.4" height="9.8" rx="0.8" fill="#3f7abf"/><path d="M20.6 3L29.2 11.8L20.6 20.4L12 11.8Z" fill="#f0c47c"/></svg>
<svg class="a" style="left:801.00px;top:93.20px;" width="29.50" height="28.00" viewBox="0 0 29.5 28"><rect x="0.4" y="0.4" width="27.8" height="21.4" fill="#fff" stroke="#9b9b9b" stroke-width="0.8"/><rect x="0.4" y="0.4" width="27.8" height="3" fill="#8a8a8a"/><path d="M4.37 3.4V21.8M8.34 3.4V21.8M12.31 3.4V21.8M16.29 3.4V21.8M20.26 3.4V21.8M24.23 3.4V21.8M0.4 8.00H28.200000000000003M0.4 12.60H28.200000000000003M0.4 17.20H28.200000000000003" stroke="#c4c4c4" stroke-width="0.75" fill="none"/><rect x="5.2" y="7.6" width="4.4" height="4.4" fill="#3f7abf"/><rect x="12" y="15" width="18" height="13" fill="#f3f3f3" opacity="0"/><path d="M14.4 22H27.4M23.2 17.2L28.4 22L23.2 27" fill="none" stroke="#f3f3f3" stroke-width="4.2"/><path d="M14.4 22H27.4M23.2 17.2L28.4 22L23.2 27" fill="none" stroke="#ee8a3a" stroke-width="2.6"/></svg>
<svg class="a" style="left:842.60px;top:94.00px;" width="28.00" height="27.00" viewBox="0 0 28 27"><rect x="0.4" y="0.4" width="23.4" height="21.599999999999998" fill="#fff" stroke="#9b9b9b" stroke-width="0.8"/><rect x="0.4" y="0.4" width="23.4" height="3" fill="#8a8a8a"/><path d="M4.30 3.4V22.0M8.20 3.4V22.0M12.10 3.4V22.0M16.00 3.4V22.0M19.90 3.4V22.0M0.4 8.05H23.8M0.4 12.70H23.8M0.4 17.35H23.8" stroke="#c4c4c4" stroke-width="0.75" fill="none"/></svg>
<svg class="a" style="left:896.00px;top:91.20px;" width="28.40" height="20.00" viewBox="0 0 28.4 20"><rect x="4.8" y="9.4" width="23.2" height="10.1" rx="0.6" fill="#3f7abf"/><path d="M4.6 0H8.9V4.6H13.6V8.9H8.9V13.5H4.6V8.9H0V4.6H4.6Z" fill="#4ea585" stroke="#f3f3f3" stroke-width="0.9" paint-order="stroke fill"/></svg>
<svg class="a" style="left:940.60px;top:91.20px;" width="29.40" height="19.00" viewBox="0 0 29.4 19"><path d="M5.6 17.4V11.2H28.2V17.4" fill="none" stroke="#7a7a7a" stroke-width="1.9"/><path d="M4.6 0H8.9V4.6H13.6V8.9H8.9V13.5H4.6V8.9H0V4.6H4.6Z" fill="#4ea585" stroke="#f3f3f3" stroke-width="0.9" paint-order="stroke fill"/></svg>
<svg class="a" style="left:994.00px;top:90.20px;" width="26.00" height="25.60" viewBox="0 0 26 25.6"><path d="M14.6 3.8L25.4 14.6L14.6 25.2L4 14.6Z" fill="#858585"/><path d="M4.6 0H8.9V4.6H13.6V8.9H8.9V13.5H4.6V8.9H0V4.6H4.6Z" fill="#4ea585" stroke="#f3f3f3" stroke-width="0.9" paint-order="stroke fill"/></svg>
<svg class="a" style="left:1052.00px;top:90.20px;" width="28.00" height="28.20" viewBox="0 0 28 28.2"><g opacity="0.9"><path d="M4.2 11.8L10.2 7H27.4V21L21.6 27.6H4.2Z" fill="#cfcfcf"/><path d="M4.2 11.8H21.6V27.6M21.6 11.8L27.4 7" fill="none" stroke="#e4e4e4" stroke-width="0.9"/></g><path d="M4.6 0H8.9V4.6H13.6V8.9H8.9V13.5H4.6V8.9H0V4.6H4.6Z" fill="#c6c6c6" stroke="#f3f3f3" stroke-width="0.9" paint-order="stroke fill"/></svg>
<svg class="a" style="left:1131.80px;top:93.20px;" width="28.60" height="23.80" viewBox="0 0 28.6 23.8"><rect x="0.5" y="0.5" width="27.4" height="22.8" fill="#fff" stroke="#8d8d8d" stroke-width="0.9"/><rect x="0.5" y="0.5" width="27.4" height="3.6" fill="#3f7abf"/><rect x="2.6" y="11.4" width="9.4" height="3.2" rx="1.2" fill="#3f7abf"/><path d="M14.4 5.6V21.6" stroke="#9a9a9a" stroke-width="1"/><path d="M16.6 7.6H25.4M16.6 10.2H25.4M16.6 12.8H25.4M16.6 15.4H25.4M16.6 18H25.4M16.6 20.6H25.4" stroke="#c4c4c4" stroke-width="0.9"/></svg>
<svg class="a" style="left:1182.00px;top:90.60px;" width="14.00" height="14.00" viewBox="0 0 14 14"><path d="M0.3 0.3H13.6V13.4H3.4L0.3 10.4Z" fill="#dcd8dc"/><path d="M0.3 10.4H3.4V13.4" fill="#cfcacf"/></svg>
<svg class="a" style="left:1182.00px;top:112.80px;" width="14.00" height="13.60" viewBox="0 0 14 13.6"><rect x="0.5" y="0.5" width="13" height="12.4" fill="#fff" stroke="#7d7d7d" stroke-width="0.9"/><rect x="0.5" y="0.5" width="13" height="2.8" fill="#3f7abf"/><path d="M2.2 6H5.4M2.2 8.4H5.4M2.2 10.8H5.4M7 6H12M7 10.8V8.2H12V10.8M9.5 8.2V10.8" fill="none" stroke="#8d8d8d" stroke-width="0.8"/></svg>
<svg class="a" style="left:1181.60px;top:135.00px;" width="14.60" height="14.20" viewBox="0 0 14.6 14.2"><path d="M0.4 0.5H13.4" stroke="#8a8a8a" stroke-width="0.9" stroke-dasharray="2.2 1.4"/><path d="M0.8 2.6H12.6V8.4H0.8Z" fill="none" stroke="#8a8a8a" stroke-width="0.9"/><path d="M0.8 2.6V0.6M12.6 2.6V0.6" stroke="#8a8a8a" stroke-width="0.8"/><rect x="6" y="9.6" width="8.4" height="4.2" rx="0.6" fill="#3f7abf"/><path d="M5.6 5.4V12M2.4 8.7H8.8" stroke="#3c9a6a" stroke-width="1.3"/></svg>
<svg class="a" style="left:1313.00px;top:99.00px;" width="25.00" height="20.40" viewBox="0 0 25 20.4"><rect x="0" y="0" width="24" height="11" rx="0.6" fill="#3f7abf"/><path d="M13.4 3.4V17.6L16.6 14.6L19 19.8L21.2 18.8L18.8 13.8H23Z" fill="#fff" stroke="#6a6a6a" stroke-width="0.9"/></svg>
<svg class="a" style="left:1348.40px;top:90.60px;" width="14.00" height="14.00" viewBox="0 0 14 14"><circle cx="8.6" cy="5" r="3.9" fill="none" stroke="#3f7abf" stroke-width="1.4"/><path d="M5.8 7.8L0.8 12.8" stroke="#3f7abf" stroke-width="1.7"/></svg>
<svg class="a" style="left:1349.00px;top:113.60px;" width="13.00" height="12.60" viewBox="0 0 13 12.6"><path d="M8.4 0.6L12.2 4.4L5.6 11.2L1.4 7.2Z" fill="#ec6d85"/><path d="M3.6 5L7.8 9" stroke="#f3f3f3" stroke-width="0.7"/><path d="M1.4 7.2L3.6 5L7.8 9L5.6 11.2Z" fill="#f08da0"/></svg>
<svg class="a" style="left:1348.20px;top:135.20px;" width="14.00" height="13.80" viewBox="0 0 14 13.8"><rect x="0.5" y="0.5" width="12.8" height="12.6" fill="#fff" stroke="#8a8a8a" stroke-width="0.9"/><rect x="0.5" y="0.5" width="12.8" height="1.4" fill="#777"/><path d="M6.9 3.6V10.4M3.8 7.6L6.9 10.6L10 7.6" fill="none" stroke="#2f6fbf" stroke-width="1.5"/></svg>
<svg class="a" style="left:94.50px;top:186.30px;" width="14.40" height="14.40" viewBox="0 0 14.4 14.4"><circle cx="7.2" cy="7.2" r="7.1" fill="#3f78b7"/><rect x="6.2" y="6" width="2" height="5.6" fill="#fff"/><circle cx="7.2" cy="3.9" r="1.15" fill="#fff"/></svg>
<svg class="a" style="left:126.4px;top:210.90px" width="12" height="12" viewBox="-6 -6 12 12"><g transform="translate(0.75,-0.35) scale(1.12)"><g transform="rotate(45)"><path d="M0 3V7.4" stroke="#6a6a7a" stroke-width="1"/><path d="M-2.6 -4.3H2.6Q3.3 -3.4 2.5 -2.7L1.6 -2.1L1.9 0.5Q3.6 1.4 3.4 3H-3.4Q-3.6 1.4 -1.9 0.5L-1.6 -2.1L-2.5 -2.7Q-3.3 -3.4 -2.6 -4.3Z" fill="#3fd0d0"/></g></g></svg>
<svg class="a" style="left:126.4px;top:232.46px" width="12" height="12" viewBox="-6 -6 12 12"><g transform="translate(0.75,-0.35) scale(1.12)"><g transform="rotate(45)"><path d="M0 3V7.4" stroke="#6a6a7a" stroke-width="1"/><path d="M-2.6 -4.3H2.6Q3.3 -3.4 2.5 -2.7L1.6 -2.1L1.9 0.5Q3.6 1.4 3.4 3H-3.4Q-3.6 1.4 -1.9 0.5L-1.6 -2.1L-2.5 -2.7Q-3.3 -3.4 -2.6 -4.3Z" fill="#3fd0d0"/></g></g></svg>
<svg class="a" style="left:126.4px;top:254.03px" width="12" height="12" viewBox="-6 -6 12 12"><g transform="translate(0.75,-0.35) scale(1.12)"><g transform="rotate(45)"><path d="M0 3V7.4" stroke="#6a6a7a" stroke-width="1"/><path d="M-2.6 -4.3H2.6Q3.3 -3.4 2.5 -2.7L1.6 -2.1L1.9 0.5Q3.6 1.4 3.4 3H-3.4Q-3.6 1.4 -1.9 0.5L-1.6 -2.1L-2.5 -2.7Q-3.3 -3.4 -2.6 -4.3Z" fill="#3fd0d0"/></g></g></svg>
<svg class="a" style="left:126.4px;top:275.59px" width="12" height="12" viewBox="-6 -6 12 12"><g transform="translate(0.75,-0.35) scale(1.12)"><g transform="rotate(45)"><path d="M0 3V7.4" stroke="#6a6a7a" stroke-width="1"/><path d="M-2.6 -4.3H2.6Q3.3 -3.4 2.5 -2.7L1.6 -2.1L1.9 0.5Q3.6 1.4 3.4 3H-3.4Q-3.6 1.4 -1.9 0.5L-1.6 -2.1L-2.5 -2.7Q-3.3 -3.4 -2.6 -4.3Z" fill="#3fd0d0"/></g></g></svg>
<svg class="a" style="left:126.4px;top:297.15px" width="12" height="12" viewBox="-6 -6 12 12"><g transform="translate(0.75,-0.35) scale(1.12)"><g transform="rotate(45)"><path d="M0 3V7.4" stroke="#6a6a7a" stroke-width="1"/><path d="M-2.6 -4.3H2.6Q3.3 -3.4 2.5 -2.7L1.6 -2.1L1.9 0.5Q3.6 1.4 3.4 3H-3.4Q-3.6 1.4 -1.9 0.5L-1.6 -2.1L-2.5 -2.7Q-3.3 -3.4 -2.6 -4.3Z" fill="#3fd0d0"/></g></g></svg>
<svg class="a" style="left:126.4px;top:318.71px" width="12" height="12" viewBox="-6 -6 12 12"><g transform="translate(0.75,-0.35) scale(1.12)"><g transform="rotate(45)"><path d="M0 3V7.4" stroke="#6a6a7a" stroke-width="1"/><path d="M-2.6 -4.3H2.6Q3.3 -3.4 2.5 -2.7L1.6 -2.1L1.9 0.5Q3.6 1.4 3.4 3H-3.4Q-3.6 1.4 -1.9 0.5L-1.6 -2.1L-2.5 -2.7Q-3.3 -3.4 -2.6 -4.3Z" fill="#3fd0d0"/></g></g></svg>
<svg class="a" style="left:126.4px;top:340.27px" width="12" height="12" viewBox="-6 -6 12 12"><g transform="translate(0.75,-0.35) scale(1.12)"><g transform="rotate(45)"><path d="M0 3V7.4" stroke="#6a6a7a" stroke-width="1"/><path d="M-2.6 -4.3H2.6Q3.3 -3.4 2.5 -2.7L1.6 -2.1L1.9 0.5Q3.6 1.4 3.4 3H-3.4Q-3.6 1.4 -1.9 0.5L-1.6 -2.1L-2.5 -2.7Q-3.3 -3.4 -2.6 -4.3Z" fill="#3fd0d0"/></g></g></svg>
<svg class="a" style="left:126.4px;top:361.84px" width="12" height="12" viewBox="-6 -6 12 12"><g transform="translate(0.75,-0.35) scale(1.12)"><g transform="rotate(45)"><path d="M0 3V7.4" stroke="#6a6a7a" stroke-width="1"/><path d="M-2.6 -4.3H2.6Q3.3 -3.4 2.5 -2.7L1.6 -2.1L1.9 0.5Q3.6 1.4 3.4 3H-3.4Q-3.6 1.4 -1.9 0.5L-1.6 -2.1L-2.5 -2.7Q-3.3 -3.4 -2.6 -4.3Z" fill="#3fd0d0"/></g></g></svg>
<svg class="a" style="left:126.4px;top:383.40px" width="12" height="12" viewBox="-6 -6 12 12"><g transform="translate(0.75,-0.35) scale(1.12)"><g transform="rotate(45)"><path d="M0 3V7.4" stroke="#6a6a7a" stroke-width="1"/><path d="M-2.6 -4.3H2.6Q3.3 -3.4 2.5 -2.7L1.6 -2.1L1.9 0.5Q3.6 1.4 3.4 3H-3.4Q-3.6 1.4 -1.9 0.5L-1.6 -2.1L-2.5 -2.7Q-3.3 -3.4 -2.6 -4.3Z" fill="#3fd0d0"/></g></g></svg>
<svg class="a" style="left:126.4px;top:404.96px" width="12" height="12" viewBox="-6 -6 12 12"><g transform="translate(0.75,-0.35) scale(1.12)"><g transform="rotate(45)"><path d="M0 3V7.4" stroke="#6a6a7a" stroke-width="1"/><path d="M-2.6 -4.3H2.6Q3.3 -3.4 2.5 -2.7L1.6 -2.1L1.9 0.5Q3.6 1.4 3.4 3H-3.4Q-3.6 1.4 -1.9 0.5L-1.6 -2.1L-2.5 -2.7Q-3.3 -3.4 -2.6 -4.3Z" fill="#3fd0d0"/></g></g></svg>
<svg class="a" style="left:124.2px;top:426.32px" width="12" height="12" viewBox="-6 -6 12 12"><g transform="translate(0.75,-0.35) scale(1.08)"><g transform="rotate(45)"><path d="M0 3V7.4" stroke="#8a4a6a" stroke-width="1"/><path d="M-2.6 -4.3H2.6Q3.3 -3.4 2.5 -2.7L1.6 -2.1L1.9 0.5Q3.6 1.4 3.4 3H-3.4Q-3.6 1.4 -1.9 0.5L-1.6 -2.1L-2.5 -2.7Q-3.3 -3.4 -2.6 -4.3Z" fill="#3fd0d0"/></g></g></svg>
<svg class="a" style="left:124.2px;top:447.89px" width="12" height="12" viewBox="-6 -6 12 12"><g transform="translate(0.75,-0.35) scale(1.08)"><g transform="rotate(45)"><path d="M0 3V7.4" stroke="#8a4a6a" stroke-width="1"/><path d="M-2.6 -4.3H2.6Q3.3 -3.4 2.5 -2.7L1.6 -2.1L1.9 0.5Q3.6 1.4 3.4 3H-3.4Q-3.6 1.4 -1.9 0.5L-1.6 -2.1L-2.5 -2.7Q-3.3 -3.4 -2.6 -4.3Z" fill="#3fd0d0"/></g></g></svg>
<svg class="a" style="left:126.4px;top:469.65px" width="12" height="12" viewBox="-6 -6 12 12"><g transform="translate(0.75,-0.35) scale(1.12)"><g transform="rotate(45)"><path d="M0 3V7.4" stroke="#6a6a7a" stroke-width="1"/><path d="M-2.6 -4.3H2.6Q3.3 -3.4 2.5 -2.7L1.6 -2.1L1.9 0.5Q3.6 1.4 3.4 3H-3.4Q-3.6 1.4 -1.9 0.5L-1.6 -2.1L-2.5 -2.7Q-3.3 -3.4 -2.6 -4.3Z" fill="#3fd0d0"/></g></g></svg>
<svg class="a" style="left:124.2px;top:491.01px" width="12" height="12" viewBox="-6 -6 12 12"><g transform="translate(0.75,-0.35) scale(1.08)"><g transform="rotate(45)"><path d="M0 3V7.4" stroke="#8a4a6a" stroke-width="1"/><path d="M-2.6 -4.3H2.6Q3.3 -3.4 2.5 -2.7L1.6 -2.1L1.9 0.5Q3.6 1.4 3.4 3H-3.4Q-3.6 1.4 -1.9 0.5L-1.6 -2.1L-2.5 -2.7Q-3.3 -3.4 -2.6 -4.3Z" fill="#3fd0d0"/></g></g></svg>
<svg class="a" style="left:124.2px;top:512.58px" width="12" height="12" viewBox="-6 -6 12 12"><g transform="translate(0.75,-0.35) scale(1.08)"><g transform="rotate(45)"><path d="M0 3V7.4" stroke="#8a4a6a" stroke-width="1"/><path d="M-2.6 -4.3H2.6Q3.3 -3.4 2.5 -2.7L1.6 -2.1L1.9 0.5Q3.6 1.4 3.4 3H-3.4Q-3.6 1.4 -1.9 0.5L-1.6 -2.1L-2.5 -2.7Q-3.3 -3.4 -2.6 -4.3Z" fill="#3fd0d0"/></g></g></svg>
<svg class="a" style="left:124.2px;top:534.14px" width="12" height="12" viewBox="-6 -6 12 12"><g transform="translate(0.75,-0.35) scale(1.08)"><g transform="rotate(45)"><path d="M0 3V7.4" stroke="#8a4a6a" stroke-width="1"/><path d="M-2.6 -4.3H2.6Q3.3 -3.4 2.5 -2.7L1.6 -2.1L1.9 0.5Q3.6 1.4 3.4 3H-3.4Q-3.6 1.4 -1.9 0.5L-1.6 -2.1L-2.5 -2.7Q-3.3 -3.4 -2.6 -4.3Z" fill="#3fd0d0"/></g></g></svg>
<svg class="a" style="left:126.4px;top:555.90px" width="12" height="12" viewBox="-6 -6 12 12"><g transform="translate(0.75,-0.35) scale(1.12)"><g transform="rotate(45)"><path d="M0 3V7.4" stroke="#6a6a7a" stroke-width="1"/><path d="M-2.6 -4.3H2.6Q3.3 -3.4 2.5 -2.7L1.6 -2.1L1.9 0.5Q3.6 1.4 3.4 3H-3.4Q-3.6 1.4 -1.9 0.5L-1.6 -2.1L-2.5 -2.7Q-3.3 -3.4 -2.6 -4.3Z" fill="#3fd0d0"/></g></g></svg>
<svg class="a" style="left:124.2px;top:577.26px" width="12" height="12" viewBox="-6 -6 12 12"><g transform="translate(0.75,-0.35) scale(1.08)"><g transform="rotate(45)"><path d="M0 3V7.4" stroke="#8a4a6a" stroke-width="1"/><path d="M-2.6 -4.3H2.6Q3.3 -3.4 2.5 -2.7L1.6 -2.1L1.9 0.5Q3.6 1.4 3.4 3H-3.4Q-3.6 1.4 -1.9 0.5L-1.6 -2.1L-2.5 -2.7Q-3.3 -3.4 -2.6 -4.3Z" fill="#3fd0d0"/></g></g></svg>
<svg class="a" style="left:126.4px;top:599.02px" width="12" height="12" viewBox="-6 -6 12 12"><g transform="translate(0.75,-0.35) scale(1.12)"><g transform="rotate(45)"><path d="M0 3V7.4" stroke="#6a6a7a" stroke-width="1"/><path d="M-2.6 -4.3H2.6Q3.3 -3.4 2.5 -2.7L1.6 -2.1L1.9 0.5Q3.6 1.4 3.4 3H-3.4Q-3.6 1.4 -1.9 0.5L-1.6 -2.1L-2.5 -2.7Q-3.3 -3.4 -2.6 -4.3Z" fill="#3fd0d0"/></g></g></svg>
<svg class="a" style="left:126.4px;top:636.32px" width="12" height="12" viewBox="-6 -6 12 12"><g transform="translate(0.75,-0.35) scale(1.12)"><g transform="rotate(45)"><path d="M0 3V7.4" stroke="#6a6a7a" stroke-width="1"/><path d="M-2.6 -4.3H2.6Q3.3 -3.4 2.5 -2.7L1.6 -2.1L1.9 0.5Q3.6 1.4 3.4 3H-3.4Q-3.6 1.4 -1.9 0.5L-1.6 -2.1L-2.5 -2.7Q-3.3 -3.4 -2.6 -4.3Z" fill="#3fd0d0"/></g></g></svg>
<svg class="a" style="left:126.4px;top:657.89px" width="12" height="12" viewBox="-6 -6 12 12"><g transform="translate(0.75,-0.35) scale(1.12)"><g transform="rotate(45)"><path d="M0 3V7.4" stroke="#6a6a7a" stroke-width="1"/><path d="M-2.6 -4.3H2.6Q3.3 -3.4 2.5 -2.7L1.6 -2.1L1.9 0.5Q3.6 1.4 3.4 3H-3.4Q-3.6 1.4 -1.9 0.5L-1.6 -2.1L-2.5 -2.7Q-3.3 -3.4 -2.6 -4.3Z" fill="#3fd0d0"/></g></g></svg>
<svg class="a" style="left:126.4px;top:679.45px" width="12" height="12" viewBox="-6 -6 12 12"><g transform="translate(0.75,-0.35) scale(1.12)"><g transform="rotate(45)"><path d="M0 3V7.4" stroke="#6a6a7a" stroke-width="1"/><path d="M-2.6 -4.3H2.6Q3.3 -3.4 2.5 -2.7L1.6 -2.1L1.9 0.5Q3.6 1.4 3.4 3H-3.4Q-3.6 1.4 -1.9 0.5L-1.6 -2.1L-2.5 -2.7Q-3.3 -3.4 -2.6 -4.3Z" fill="#3fd0d0"/></g></g></svg>
<svg class="a" style="left:126.4px;top:701.01px" width="12" height="12" viewBox="-6 -6 12 12"><g transform="translate(0.75,-0.35) scale(1.12)"><g transform="rotate(45)"><path d="M0 3V7.4" stroke="#6a6a7a" stroke-width="1"/><path d="M-2.6 -4.3H2.6Q3.3 -3.4 2.5 -2.7L1.6 -2.1L1.9 0.5Q3.6 1.4 3.4 3H-3.4Q-3.6 1.4 -1.9 0.5L-1.6 -2.1L-2.5 -2.7Q-3.3 -3.4 -2.6 -4.3Z" fill="#3fd0d0"/></g></g></svg>
<span class="t" style="left:398.90px;top:33.00px;font-size:10.3px;color:#c9dec9;letter-spacing:-0.109px;">Gantt Chart Tools</span>
<span class="t" style="left:663.90px;top:32.00px;font-size:11.2px;color:#fff;letter-spacing:0.039px;">Product Launch  -  Project Professional</span>
<span class="t" style="left:1218.90px;top:32.00px;font-size:11.2px;color:#fff;letter-spacing:-0.038px;">Anastasiya Stepanets</span>
<span class="t" style="left:41.10px;top:64.00px;font-size:12px;color:#fff;letter-spacing:-0.348px;">File</span>
<span class="t" style="left:89.60px;top:64.00px;font-size:12px;color:#2f6b33;letter-spacing:-0.962px;">Task</span>
<span class="t" style="left:131.20px;top:64.00px;font-size:12px;color:#fff;letter-spacing:-0.623px;">Resource</span>
<span class="t" style="left:198.40px;top:64.00px;font-size:12px;color:#fff;letter-spacing:-0.226px;">Report</span>
<span class="t" style="left:253.80px;top:64.00px;font-size:12px;color:#fff;letter-spacing:-0.160px;">Project</span>
<span class="t" style="left:309.80px;top:64.00px;font-size:12px;color:#fff;letter-spacing:-0.032px;">View</span>
<span class="t" style="left:355.60px;top:64.00px;font-size:12px;color:#fff;letter-spacing:0.171px;">Help</span>
<span class="t" style="left:417.90px;top:64.00px;font-size:12px;color:#fff;letter-spacing:-0.303px;">Format</span>
<span class="t" style="left:519.60px;top:64.00px;font-size:12px;color:#fff;letter-spacing:-0.061px;">Tell me what you want to do</span>
<span class="t" style="left:38.00px;top:160.00px;font-size:10.5px;color:#4a4a4a;letter-spacing:-0.393px;">View</span>
<span class="t" style="left:133.20px;top:160.00px;font-size:10.5px;color:#4a4a4a;letter-spacing:-0.057px;">Clipboard</span>
<span class="t" style="left:294.20px;top:160.00px;font-size:10.5px;color:#4a4a4a;letter-spacing:-0.505px;">Font</span>
<span class="t" style="left:492.30px;top:160.00px;font-size:10.5px;color:#4a4a4a;letter-spacing:-0.485px;">Schedule</span>
<span class="t" style="left:748.00px;top:160.00px;font-size:10.5px;color:#4a4a4a;letter-spacing:-0.861px;">Tasks</span>
<span class="t" style="left:981.20px;top:160.00px;font-size:10.5px;color:#4a4a4a;letter-spacing:-0.293px;">Insert</span>
<span class="t" style="left:1177.20px;top:160.00px;font-size:10.5px;color:#4a4a4a;letter-spacing:-0.151px;">Properties</span>
<span class="t" style="left:1339.20px;top:160.00px;font-size:10.5px;color:#4a4a4a;letter-spacing:-0.152px;">Editing</span>
<span class="t" style="left:35.60px;top:125.00px;font-size:11.5px;color:#444;letter-spacing:-0.010px;">Gantt</span>
<span class="t" style="left:31.60px;top:140.00px;font-size:11.5px;color:#444;letter-spacing:-0.331px;">Chart</span>
<span class="t" style="left:92.30px;top:125.00px;font-size:11.5px;color:#444;letter-spacing:-0.830px;">Paste</span>
<span class="t" style="left:146.60px;top:93.00px;font-size:11.5px;color:#444;letter-spacing:-0.203px;">Cut</span>
<span class="t" style="left:146.60px;top:115.00px;font-size:11.5px;color:#444;letter-spacing:-0.120px;">Copy</span>
<span class="t" style="left:146.90px;top:138.00px;font-size:11.5px;color:#444;letter-spacing:-0.120px;">Format Painter</span>
<span class="t" style="left:245.30px;top:101.00px;font-size:11.5px;color:#444;letter-spacing:0.134px;">Calibri</span>
<span class="t" style="left:336.80px;top:101.00px;font-size:11.5px;color:#444;letter-spacing:-0.6px;">11</span>
<span class="t" style="left:249.30px;top:131.00px;font-size:11.5px;color:#444;font-weight:700;">B</span>
<span class="t" style="left:272.80px;top:131.00px;font-size:11.5px;color:#444;font-weight:700;font-style:italic;font-family:"Liberation Serif",serif;">I</span>
<span class="t" style="left:292.60px;top:131.00px;font-size:11.5px;color:#444;text-decoration:underline;">U</span>
<span class="t" style="left:353.60px;top:127.00px;font-size:13px;color:#444;">A</span>
<span class="t" style="left:540.30px;top:93.00px;font-size:11.5px;color:#444;letter-spacing:-0.088px;">Mark on Track</span>
<span class="t" style="left:540.30px;top:115.00px;font-size:11.5px;color:#444;letter-spacing:-0.345px;">Respect Links</span>
<span class="t" style="left:540.30px;top:138.00px;font-size:11.5px;color:#444;letter-spacing:0.018px;">Inactivate</span>
<span class="t" style="left:647.60px;top:125.00px;font-size:11.5px;color:#444;letter-spacing:0.010px;">Manually</span>
<span class="t" style="left:647.60px;top:140.00px;font-size:11.5px;color:#444;letter-spacing:-0.310px;">Schedule</span>
<span class="t" style="left:708.30px;top:125.00px;font-size:11.5px;color:#444;letter-spacing:0.476px;">Auto</span>
<span class="t" style="left:697.60px;top:140.00px;font-size:11.5px;color:#444;letter-spacing:-0.267px;">Schedule</span>
<span class="t" style="left:756.30px;top:125.00px;font-size:11.5px;color:#444;letter-spacing:-0.163px;">Inspect</span>
<span class="t" style="left:800.30px;top:125.00px;font-size:11.5px;color:#444;letter-spacing:0.125px;">Move</span>
<span class="t" style="left:839.20px;top:125.00px;font-size:11.5px;color:#444;letter-spacing:0.573px;">Mode</span>
<span class="t" style="left:899.60px;top:125.00px;font-size:11.5px;color:#444;letter-spacing:-0.719px;">Task</span>
<span class="t" style="left:932.30px;top:125.00px;font-size:11.5px;color:#444;letter-spacing:-0.301px;">Summary</span>
<span class="t" style="left:983.90px;top:125.00px;font-size:11.5px;color:#444;letter-spacing:0.073px;">Milestone</span>
<span class="t" style="left:1038.00px;top:125.00px;font-size:11.5px;color:#b9b9b9;letter-spacing:0.117px;">Deliverable</span>
<span class="t" style="left:1115.60px;top:125.00px;font-size:11.5px;color:#444;letter-spacing:0.257px;">Information</span>
<span class="t" style="left:1200.00px;top:93.00px;font-size:11.5px;color:#b5b5b5;letter-spacing:-0.012px;">Notes</span>
<span class="t" style="left:1200.00px;top:115.00px;font-size:11.5px;color:#444;letter-spacing:0.041px;">Details</span>
<span class="t" style="left:1200.00px;top:138.00px;font-size:11.5px;color:#444;letter-spacing:0.224px;">Add to Timeline</span>
<span class="t" style="left:1310.30px;top:125.00px;font-size:11.5px;color:#444;letter-spacing:-0.073px;">Scroll</span>
<span class="t" style="left:1306.90px;top:140.00px;font-size:11.5px;color:#444;letter-spacing:-0.122px;">to Task</span>
<span class="t" style="left:1366.30px;top:93.00px;font-size:11.5px;color:#444;letter-spacing:-0.425px;">Find</span>
<span class="t" style="left:1366.30px;top:115.00px;font-size:11.5px;color:#444;letter-spacing:-0.346px;">Clear</span>
<span class="t" style="left:1366.30px;top:138.00px;font-size:11.5px;color:#444;letter-spacing:-0.201px;">Fill</span>
<span class="t" style="left:126.20px;top:178.00px;font-size:12.3px;color:#6b6b6b;letter-spacing:-0.899px;">Task</span>
<span class="t" style="left:126.20px;top:194.00px;font-size:12.3px;color:#6b6b6b;letter-spacing:-0.189px;">Mode</span>
<span class="t" style="left:184.50px;top:192.00px;font-size:12.3px;color:#2e7d32;font-weight:700;letter-spacing:-0.566px;">Task Name</span>
<span class="t" style="left:334.40px;top:192.00px;font-size:12.3px;color:#6b6b6b;letter-spacing:-0.226px;">Duration</span>
<span class="t" style="left:416.70px;top:192.00px;font-size:12.3px;color:#6b6b6b;letter-spacing:-0.421px;">Start</span>
<span class="t" style="left:27.30px;top:528.40px;font-size:13.2px;color:#2e7d32;letter-spacing:-0.561px;-webkit-text-stroke:0.35px #2e7d32;transform-origin:0 0;transform:rotate(-90deg);">GANTT CHART</span>
<span class="t" style="left:60.80px;top:212.00px;font-size:12.2px;color:#707070;">1</span>
<span class="t" style="left:192.40px;top:212.00px;font-size:12.3px;color:#000;font-weight:700;letter-spacing:-0.046px;">Market Research</span>
<span class="t" style="left:332.00px;top:212.00px;font-size:12.3px;color:#000;font-weight:700;letter-spacing:-0.188px;">12 days</span>
<span class="t" style="left:414.80px;top:212.00px;font-size:12.3px;color:#000;font-weight:700;letter-spacing:0.203px;">Mon 01.03.21</span>
<span class="t" style="left:60.80px;top:233.00px;font-size:12.2px;color:#707070;">2</span>
<span class="t" style="left:204.60px;top:233.00px;font-size:12.3px;color:#222;letter-spacing:0.344px;">Target Markets</span>
<span class="t" style="left:332.00px;top:233.00px;font-size:12.3px;color:#222;letter-spacing:-0.087px;">7 days</span>
<span class="t" style="left:414.80px;top:233.00px;font-size:12.3px;color:#222;letter-spacing:0.298px;">Mon 01.03.21</span>
<span class="t" style="left:60.80px;top:255.00px;font-size:12.2px;color:#707070;">3</span>
<span class="t" style="left:204.60px;top:255.00px;font-size:12.3px;color:#222;letter-spacing:0.184px;">Target Customers</span>
<span class="t" style="left:332.00px;top:255.00px;font-size:12.3px;color:#222;letter-spacing:-0.087px;">9 days</span>
<span class="t" style="left:414.80px;top:255.00px;font-size:12.3px;color:#222;letter-spacing:0.298px;">Mon 01.03.21</span>
<span class="t" style="left:60.80px;top:276.00px;font-size:12.2px;color:#707070;">4</span>
<span class="t" style="left:204.60px;top:276.00px;font-size:12.3px;color:#222;letter-spacing:0.092px;overflow:hidden;width:124.6px;padding-bottom:3px;">Competitors Research</span>
<span class="t" style="left:332.00px;top:276.00px;font-size:12.3px;color:#222;letter-spacing:-0.096px;">10 days</span>
<span class="t" style="left:414.80px;top:276.00px;font-size:12.3px;color:#222;letter-spacing:0.195px;">Wed 03.03.21</span>
<span class="t" style="left:60.80px;top:298.00px;font-size:12.2px;color:#707070;">5</span>
<span class="t" style="left:204.60px;top:298.00px;font-size:12.3px;color:#222;letter-spacing:-0.137px;overflow:hidden;width:124.6px;padding-bottom:3px;">Similar Products Research</span>
<span class="t" style="left:332.00px;top:298.00px;font-size:12.3px;color:#222;letter-spacing:-0.096px;">12 days</span>
<span class="t" style="left:414.80px;top:298.00px;font-size:12.3px;color:#222;letter-spacing:0.298px;">Mon 01.03.21</span>
<span class="t" style="left:60.80px;top:319.00px;font-size:12.2px;color:#2e6b34;font-weight:700;">6</span>
<span class="t" style="left:192.40px;top:319.00px;font-size:12.3px;color:#000;font-weight:700;letter-spacing:-0.069px;">Product Concept</span>
<span class="t" style="left:332.00px;top:319.00px;font-size:12.3px;color:#000;font-weight:700;letter-spacing:0.120px;">16,13 days</span>
<span class="t" style="left:414.80px;top:319.00px;font-size:12.3px;color:#000;font-weight:700;letter-spacing:0.161px;">Wed 17.03.21</span>
<span class="t" style="left:497.40px;top:319.00px;font-size:12.3px;color:#000;font-weight:700;letter-spacing:0.161px;">Wed 07.04.21</span>
<span class="t" style="left:60.80px;top:341.00px;font-size:12.2px;color:#2e6b34;font-weight:700;">7</span>
<span class="t" style="left:204.60px;top:341.00px;font-size:12.3px;color:#222;letter-spacing:-0.268px;">Stage 1</span>
<span class="t" style="left:332.00px;top:341.00px;font-size:12.3px;color:#222;letter-spacing:-0.096px;">10 days</span>
<span class="t" style="left:414.80px;top:341.00px;font-size:12.3px;color:#222;letter-spacing:0.195px;">Wed 17.03.21</span>
<span class="t" style="left:497.40px;top:341.00px;font-size:12.3px;color:#222;letter-spacing:0.195px;">Wed 31.03.21</span>
<span class="t" style="left:60.80px;top:363.00px;font-size:12.2px;color:#2e6b34;font-weight:700;">8</span>
<span class="t" style="left:204.60px;top:363.00px;font-size:12.3px;color:#222;letter-spacing:-0.268px;">Stage 2</span>
<span class="t" style="left:332.00px;top:363.00px;font-size:12.3px;color:#222;letter-spacing:-0.087px;">5 days</span>
<span class="t" style="left:414.80px;top:363.00px;font-size:12.3px;color:#222;letter-spacing:0.195px;">Wed 31.03.21</span>
<span class="t" style="left:497.40px;top:363.00px;font-size:12.3px;color:#222;letter-spacing:0.097px;">Tue 06.04.21</span>
<span class="t" style="left:60.80px;top:384.00px;font-size:12.2px;color:#2e6b34;font-weight:700;">9</span>
<span class="t" style="left:204.60px;top:384.00px;font-size:12.3px;color:#222;letter-spacing:0.316px;">Report</span>
<span class="t" style="left:332.00px;top:384.00px;font-size:12.3px;color:#222;letter-spacing:-0.087px;">0 days</span>
<span class="t" style="left:414.80px;top:384.00px;font-size:12.3px;color:#222;letter-spacing:0.195px;">Wed 07.04.21</span>
<span class="t" style="left:497.40px;top:384.00px;font-size:12.3px;color:#222;letter-spacing:0.195px;">Wed 07.04.21</span>
<span class="t" style="left:57.40px;top:406.00px;font-size:12.2px;color:#707070;">10</span>
<span class="t" style="left:192.40px;top:406.00px;font-size:12.3px;color:#000;font-weight:700;letter-spacing:-0.205px;">Features&amp;Functions</span>
<span class="t" style="left:332.00px;top:406.00px;font-size:12.3px;color:#000;font-weight:700;letter-spacing:-0.199px;">9 days</span>
<span class="t" style="left:414.80px;top:406.00px;font-size:12.3px;color:#000;font-weight:700;letter-spacing:0.161px;">Wed 17.03.21</span>
<span class="t" style="left:497.40px;top:406.00px;font-size:12.3px;color:#000;font-weight:700;letter-spacing:0.203px;">Mon 29.03.21</span>
<span class="t" style="left:57.40px;top:427.00px;font-size:12.2px;color:#707070;">11</span>
<span class="t" style="left:204.60px;top:427.00px;font-size:12.3px;color:#222;letter-spacing:0.194px;">Required Materials</span>
<span class="t" style="left:332.00px;top:427.00px;font-size:12.3px;color:#222;letter-spacing:-0.087px;">5 days</span>
<span class="t" style="left:57.40px;top:449.00px;font-size:12.2px;color:#707070;">12</span>
<span class="t" style="left:204.60px;top:449.00px;font-size:12.3px;color:#222;letter-spacing:0.174px;">Required Methods</span>
<span class="t" style="left:332.00px;top:449.00px;font-size:12.3px;color:#222;letter-spacing:-0.087px;">4 days</span>
<span class="t" style="left:57.40px;top:470.00px;font-size:12.2px;color:#707070;">13</span>
<span class="t" style="left:192.40px;top:470.00px;font-size:12.3px;color:#000;font-weight:700;letter-spacing:-0.192px;">Budget</span>
<span class="t" style="left:332.00px;top:470.00px;font-size:12.3px;color:#000;font-weight:700;letter-spacing:-0.076px;">11 days</span>
<span class="t" style="left:414.80px;top:470.00px;font-size:12.3px;color:#000;font-weight:700;letter-spacing:-0.109px;">Fri 19.03.21</span>
<span class="t" style="left:497.40px;top:470.00px;font-size:12.3px;color:#000;font-weight:700;letter-spacing:0.203px;">Mon 05.04.21</span>
<span class="t" style="left:57.40px;top:492.00px;font-size:12.2px;color:#707070;">14</span>
<span class="t" style="left:204.60px;top:492.00px;font-size:12.3px;color:#222;letter-spacing:0.199px;">Work with Sponsors</span>
<span class="t" style="left:332.00px;top:492.00px;font-size:12.3px;color:#222;letter-spacing:0.057px;">11 days</span>
<span class="t" style="left:57.40px;top:513.00px;font-size:12.2px;color:#707070;">15</span>
<span class="t" style="left:204.60px;top:513.00px;font-size:12.3px;color:#222;letter-spacing:0.428px;overflow:hidden;width:124.6px;padding-bottom:3px;">Work with Contractors</span>
<span class="t" style="left:332.00px;top:513.00px;font-size:12.3px;color:#222;letter-spacing:0.057px;">11 days</span>
<span class="t" style="left:57.40px;top:535.00px;font-size:12.2px;color:#707070;">16</span>
<span class="t" style="left:204.60px;top:535.00px;font-size:12.3px;color:#222;letter-spacing:0.113px;overflow:hidden;width:124.6px;padding-bottom:3px;">Model Product Life Cycle</span>
<span class="t" style="left:332.00px;top:535.00px;font-size:12.3px;color:#222;letter-spacing:0.057px;">11 days</span>
<span class="t" style="left:57.40px;top:557.00px;font-size:12.2px;color:#707070;">17</span>
<span class="t" style="left:192.40px;top:557.00px;font-size:12.3px;color:#000;font-weight:700;letter-spacing:-0.234px;">Pricing Strategy</span>
<span class="t" style="left:332.00px;top:557.00px;font-size:12.3px;color:#000;font-weight:700;letter-spacing:-0.199px;">8 days</span>
<span class="t" style="left:414.80px;top:557.00px;font-size:12.3px;color:#000;font-weight:700;letter-spacing:-0.109px;">Fri 19.03.21</span>
<span class="t" style="left:497.40px;top:557.00px;font-size:12.3px;color:#000;font-weight:700;letter-spacing:0.079px;">Tue 30.03.21</span>
<span class="t" style="left:57.40px;top:578.00px;font-size:12.2px;color:#707070;">20</span>
<span class="t" style="left:192.40px;top:578.00px;font-size:12.3px;color:#000;font-weight:700;letter-spacing:0.219px;">Marketing&amp;Promotion</span>
<span class="t" style="left:57.40px;top:600.00px;font-size:12.2px;color:#707070;">21</span>
<span class="t" style="left:192.40px;top:600.00px;font-size:12.3px;color:#000;font-weight:700;letter-spacing:-0.197px;">Sales &amp; Distribution</span>
<span class="t" style="left:192.40px;top:618.00px;font-size:12.3px;color:#000;font-weight:700;letter-spacing:-0.060px;">Strategy</span>
<span class="t" style="left:332.00px;top:600.00px;font-size:12.3px;color:#000;font-weight:700;letter-spacing:-0.188px;">16 days</span>
<span class="t" style="left:414.80px;top:600.00px;font-size:12.3px;color:#000;font-weight:700;letter-spacing:-0.109px;">Fri 19.03.21</span>
<span class="t" style="left:497.40px;top:600.00px;font-size:12.3px;color:#000;font-weight:700;letter-spacing:-0.109px;">Fri 09.04.21</span>
<span class="t" style="left:57.40px;top:637.00px;font-size:12.2px;color:#707070;">22</span>
<span class="t" style="left:204.60px;top:637.00px;font-size:12.3px;color:#222;letter-spacing:-0.268px;">Stage 1</span>
<span class="t" style="left:332.00px;top:637.00px;font-size:12.3px;color:#222;letter-spacing:-0.087px;">7 days</span>
<span class="t" style="left:414.80px;top:637.00px;font-size:12.3px;color:#222;letter-spacing:0.016px;">Fri 19.03.21</span>
<span class="t" style="left:497.40px;top:637.00px;font-size:12.3px;color:#222;letter-spacing:0.298px;">Mon 29.03.21</span>
<span class="t" style="left:57.40px;top:659.00px;font-size:12.2px;color:#707070;">23</span>
<span class="t" style="left:204.60px;top:659.00px;font-size:12.3px;color:#222;letter-spacing:-0.268px;">Stage 2</span>
<span class="t" style="left:332.00px;top:659.00px;font-size:12.3px;color:#222;letter-spacing:-0.087px;">5 days</span>
<span class="t" style="left:414.80px;top:659.00px;font-size:12.3px;color:#222;letter-spacing:0.298px;">Mon 29.03.21</span>
<span class="t" style="left:497.40px;top:659.00px;font-size:12.3px;color:#222;letter-spacing:0.016px;">Fri 02.04.21</span>
<span class="t" style="left:57.40px;top:680.00px;font-size:12.2px;color:#707070;">24</span>
<span class="t" style="left:204.60px;top:680.00px;font-size:12.3px;color:#222;letter-spacing:-0.268px;">Stage 3</span>
<span class="t" style="left:332.00px;top:680.00px;font-size:12.3px;color:#222;letter-spacing:-0.087px;">6 days</span>
<span class="t" style="left:414.80px;top:680.00px;font-size:12.3px;color:#222;letter-spacing:0.016px;">Fri 02.04.21</span>
<span class="t" style="left:497.40px;top:680.00px;font-size:12.3px;color:#222;letter-spacing:0.016px;">Fri 09.04.21</span>
<span class="t" style="left:57.40px;top:702.00px;font-size:12.2px;color:#707070;">25</span>
<span class="t" style="left:192.40px;top:702.00px;font-size:12.3px;color:#222;letter-spacing:-0.171px;">Release</span>
<span class="t" style="left:332.00px;top:702.00px;font-size:12.3px;color:#222;letter-spacing:-0.087px;">0 days</span>
<span class="t" style="left:414.80px;top:702.00px;font-size:12.3px;color:#222;letter-spacing:0.298px;">Mon 12.04.21</span>
<span class="t" style="left:497.40px;top:702.00px;font-size:12.3px;color:#222;letter-spacing:0.298px;">Mon 12.04.21</span>
<span class="t" style="left:692.30px;top:177.00px;font-size:9.6px;color:#767676;letter-spacing:0.352px;">01 Mar &#x27;21</span>
<span class="t" style="left:693.19px;top:193.00px;font-size:9.6px;color:#767676;">M</span>
<span class="t" style="left:713.63px;top:193.00px;font-size:9.6px;color:#767676;">T</span>
<span class="t" style="left:731.31px;top:193.00px;font-size:9.6px;color:#767676;">W</span>
<span class="t" style="left:752.20px;top:193.00px;font-size:9.6px;color:#767676;">T</span>
<span class="t" style="left:771.59px;top:193.00px;font-size:9.6px;color:#767676;">F</span>
<span class="t" style="left:790.57px;top:193.00px;font-size:9.6px;color:#767676;">S</span>
<span class="t" style="left:809.86px;top:193.00px;font-size:9.6px;color:#767676;">S</span>
<span class="t" style="left:827.30px;top:177.00px;font-size:9.6px;color:#767676;letter-spacing:0.352px;">08 Mar &#x27;21</span>
<span class="t" style="left:828.19px;top:193.00px;font-size:9.6px;color:#767676;">M</span>
<span class="t" style="left:848.63px;top:193.00px;font-size:9.6px;color:#767676;">T</span>
<span class="t" style="left:866.31px;top:193.00px;font-size:9.6px;color:#767676;">W</span>
<span class="t" style="left:887.20px;top:193.00px;font-size:9.6px;color:#767676;">T</span>
<span class="t" style="left:906.59px;top:193.00px;font-size:9.6px;color:#767676;">F</span>
<span class="t" style="left:925.57px;top:193.00px;font-size:9.6px;color:#767676;">S</span>
<span class="t" style="left:944.86px;top:193.00px;font-size:9.6px;color:#767676;">S</span>
<span class="t" style="left:962.30px;top:177.00px;font-size:9.6px;color:#767676;letter-spacing:0.352px;">15 Mar &#x27;21</span>
<span class="t" style="left:963.19px;top:193.00px;font-size:9.6px;color:#767676;">M</span>
<span class="t" style="left:983.63px;top:193.00px;font-size:9.6px;color:#767676;">T</span>
<span class="t" style="left:1001.31px;top:193.00px;font-size:9.6px;color:#767676;">W</span>
<span class="t" style="left:1022.20px;top:193.00px;font-size:9.6px;color:#767676;">T</span>
<span class="t" style="left:1041.59px;top:193.00px;font-size:9.6px;color:#767676;">F</span>
<span class="t" style="left:1060.57px;top:193.00px;font-size:9.6px;color:#767676;">S</span>
<span class="t" style="left:1079.86px;top:193.00px;font-size:9.6px;color:#767676;">S</span>
<span class="t" style="left:1097.30px;top:177.00px;font-size:9.6px;color:#767676;letter-spacing:0.352px;">22 Mar &#x27;21</span>
<span class="t" style="left:1098.19px;top:193.00px;font-size:9.6px;color:#767676;">M</span>
<span class="t" style="left:1118.63px;top:193.00px;font-size:9.6px;color:#767676;">T</span>
<span class="t" style="left:1136.31px;top:193.00px;font-size:9.6px;color:#767676;">W</span>
<span class="t" style="left:1157.20px;top:193.00px;font-size:9.6px;color:#767676;">T</span>
<span class="t" style="left:1176.59px;top:193.00px;font-size:9.6px;color:#767676;">F</span>
<span class="t" style="left:1195.57px;top:193.00px;font-size:9.6px;color:#767676;">S</span>
<span class="t" style="left:1214.86px;top:193.00px;font-size:9.6px;color:#767676;">S</span>
<span class="t" style="left:1232.30px;top:177.00px;font-size:9.6px;color:#767676;letter-spacing:0.352px;">29 Mar &#x27;21</span>
<span class="t" style="left:1233.19px;top:193.00px;font-size:9.6px;color:#767676;">M</span>
<span class="t" style="left:1253.63px;top:193.00px;font-size:9.6px;color:#767676;">T</span>
<span class="t" style="left:1271.31px;top:193.00px;font-size:9.6px;color:#767676;">W</span>
<span class="t" style="left:1292.20px;top:193.00px;font-size:9.6px;color:#767676;">T</span>
<span class="t" style="left:1311.59px;top:193.00px;font-size:9.6px;color:#767676;">F</span>
<span class="t" style="left:1330.57px;top:193.00px;font-size:9.6px;color:#767676;">S</span>
<span class="t" style="left:1349.86px;top:193.00px;font-size:9.6px;color:#767676;">S</span>
<span class="t" style="left:1367.30px;top:177.00px;font-size:9.6px;color:#767676;letter-spacing:0.355px;">05 Apr &#x27;21</span>
<span class="t" style="left:1368.19px;top:193.00px;font-size:9.6px;color:#767676;">M</span>
<span class="t" style="left:1388.63px;top:193.00px;font-size:9.6px;color:#767676;">T</span>
<span class="t" style="left:1406.31px;top:193.00px;font-size:9.6px;color:#767676;">W</span>
<span class="t" style="left:1427.20px;top:193.00px;font-size:9.6px;color:#767676;">T</span>
<span class="t" style="left:1446.59px;top:193.00px;font-size:9.6px;color:#767676;">F</span>
<span class="t" style="left:1411.20px;top:382.00px;font-size:12.6px;color:#000;font-weight:700;letter-spacing:0.721px;">07.04</span>
<span class="t" style="left:404.40px;top:107.00px;font-size:5.4px;color:#555;letter-spacing:-0.1px;">0%</span>
<span class="t" style="left:424.50px;top:107.00px;font-size:5.4px;color:#555;letter-spacing:-0.1px;">25%</span>
<span class="t" style="left:446.10px;top:107.00px;font-size:5.4px;color:#555;letter-spacing:-0.1px;">50%</span>
<span class="t" style="left:467.70px;top:107.00px;font-size:5.4px;color:#555;letter-spacing:-0.1px;">75%</span>
<span class="t" style="left:488.10px;top:107.00px;font-size:5.4px;color:#555;letter-spacing:-0.1px;">100%</span>
<span class="t" style="left:777.40px;top:107.00px;font-size:11.5px;color:#3a3a3a;font-weight:700;">?</span>
<span class="t" style="left:856.60px;top:102.00px;font-size:23px;color:#3f7abf;font-weight:700;-webkit-text-stroke:1.6px #f3f3f3;paint-order:stroke fill;">?</span>
<span class="t" style="left:132.50px;top:429.00px;font-size:13.5px;color:#3a6fb5;-webkit-text-stroke:0.45px #3a6fb5;">?</span>
<span class="t" style="left:132.50px;top:451.00px;font-size:13.5px;color:#3a6fb5;-webkit-text-stroke:0.45px #3a6fb5;">?</span>
<span class="t" style="left:132.50px;top:494.00px;font-size:13.5px;color:#3a6fb5;-webkit-text-stroke:0.45px #3a6fb5;">?</span>
<span class="t" style="left:132.50px;top:515.00px;font-size:13.5px;color:#3a6fb5;-webkit-text-stroke:0.45px #3a6fb5;">?</span>
<span class="t" style="left:132.50px;top:537.00px;font-size:13.5px;color:#3a6fb5;-webkit-text-stroke:0.45px #3a6fb5;">?</span>
<span class="t" style="left:132.50px;top:580.00px;font-size:13.5px;color:#3a6fb5;-webkit-text-stroke:0.45px #3a6fb5;">?</span>
<svg class="a" style="left:177.70px;top:313.30px;" width="153.50" height="90.00" viewBox="0 0 153.50 90.00"><rect x="1.30" y="1.30" width="150.90" height="87.40" rx="1.2" fill="none" stroke="#f20000" stroke-width="2.6"/></svg>
<svg class="a" style="left:986.70px;top:310.70px;" width="471.50" height="91.00" viewBox="0 0 471.50 91.00"><rect x="1.30" y="1.30" width="468.90" height="88.40" rx="1.2" fill="none" stroke="#f20000" stroke-width="2.6"/></svg>
<div class="a" style="left:475.4px;top:173px;width:203.7px;height:144.6px;background:#fff;border:1px solid #c9c9c9;box-sizing:border-box;box-shadow:0 1px 3px rgba(0,0,0,0.10)"></div>
<span class="t" style="left:486.30px;top:183.00px;font-size:11.5px;color:#444;font-weight:700;letter-spacing:-0.092px;">Link the Selected Tasks (Ctrl+F2)</span>
<span class="t" style="left:486.30px;top:204.00px;font-size:11.2px;color:#676767;letter-spacing:0.036px;">You can link tasks so one can&#x27;t start</span>
<span class="t" style="left:486.30px;top:219.00px;font-size:11.2px;color:#676767;letter-spacing:0.156px;">until the other has finished.</span>
<span class="t" style="left:486.30px;top:250.00px;font-size:11.2px;color:#676767;letter-spacing:0.071px;">You can also link tasks in other</span>
<span class="t" style="left:486.30px;top:265.00px;font-size:11.2px;color:#676767;letter-spacing:0.043px;">ways, such as a Start-to-Start link</span>
<span class="t" style="left:486.30px;top:281.00px;font-size:11.2px;color:#676767;letter-spacing:0.133px;">when two tasks need to start at the</span>
<span class="t" style="left:486.30px;top:296.00px;font-size:11.2px;color:#676767;letter-spacing:0.120px;">same time.</span>
</div>
</body></html>
